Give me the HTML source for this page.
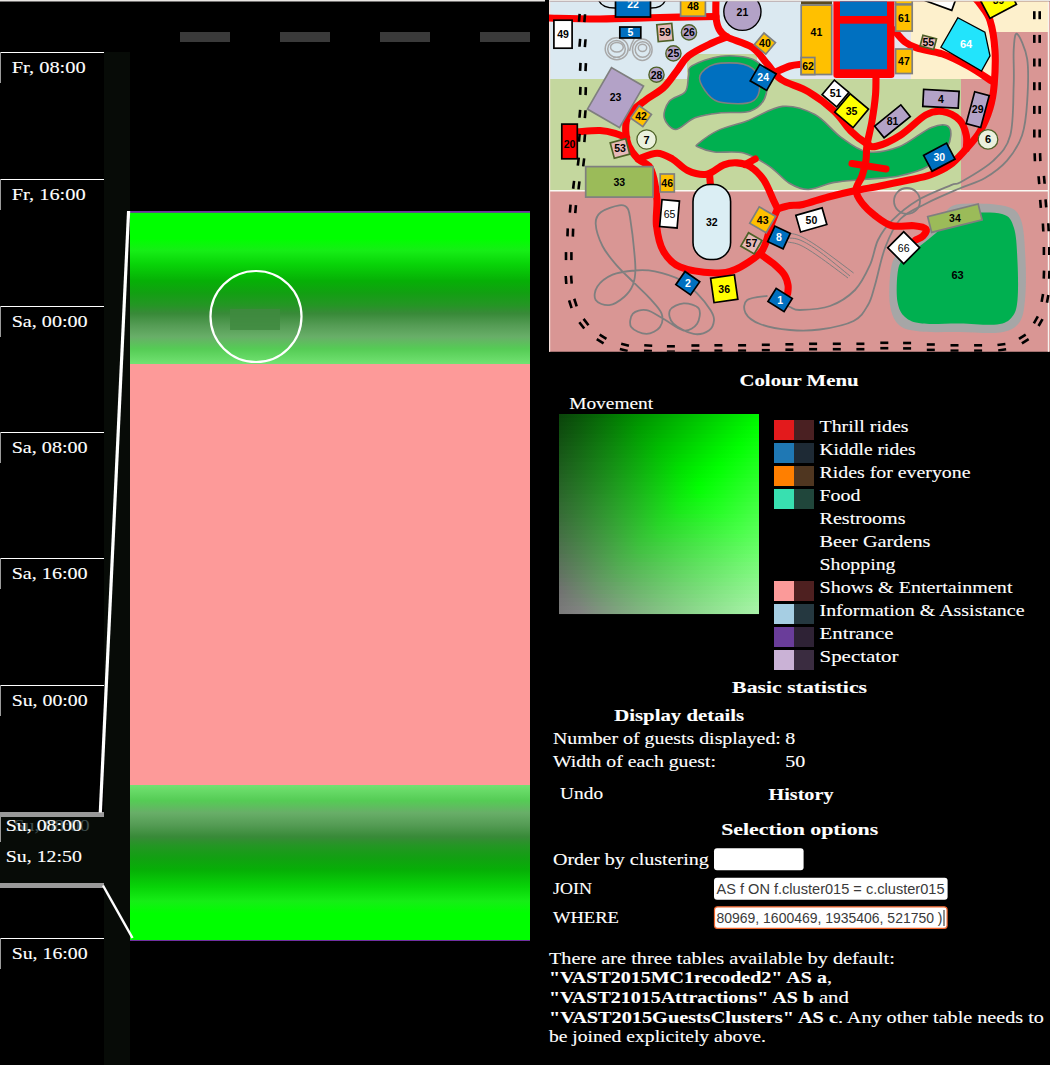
<!DOCTYPE html><html><head><meta charset="utf-8"><title>Guests</title><style>html,body{margin:0;padding:0;background:#000;overflow:hidden}svg{display:block}</style></head><body>
<svg width="1050" height="1065" viewBox="0 0 1050 1065">
<defs>
<linearGradient id="gTop" x1="0" y1="0" x2="0" y2="1"><stop offset="0" stop-color="#00ff00"/><stop offset="0.17" stop-color="#00ff00"/><stop offset="0.25" stop-color="#16ee16"/><stop offset="0.34" stop-color="#08d408"/><stop offset="0.45" stop-color="#06b006"/><stop offset="0.53" stop-color="#12a012"/><stop offset="0.61" stop-color="#249624"/><stop offset="0.665" stop-color="#388a38"/><stop offset="0.745" stop-color="#559c55"/><stop offset="0.82" stop-color="#68ae68"/><stop offset="0.9" stop-color="#55cc55"/><stop offset="1.0" stop-color="#72e272"/></linearGradient>
<linearGradient id="gBot" x1="0" y1="1" x2="0" y2="0"><stop offset="0" stop-color="#00ff00"/><stop offset="0.17" stop-color="#00ff00"/><stop offset="0.25" stop-color="#16ee16"/><stop offset="0.34" stop-color="#08d408"/><stop offset="0.45" stop-color="#06b006"/><stop offset="0.53" stop-color="#12a012"/><stop offset="0.61" stop-color="#249624"/><stop offset="0.665" stop-color="#388a38"/><stop offset="0.745" stop-color="#559c55"/><stop offset="0.82" stop-color="#68ae68"/><stop offset="0.9" stop-color="#55cc55"/><stop offset="1.0" stop-color="#72e272"/></linearGradient>
<linearGradient id="mvTop" x1="0" y1="0" x2="1" y2="0"><stop offset="0" stop-color="#0f4a0f"/><stop offset="0.45" stop-color="#009900"/><stop offset="0.8" stop-color="#00ff00"/><stop offset="1" stop-color="#00ff00"/></linearGradient>
<linearGradient id="mvBot" x1="0" y1="0" x2="1" y2="0"><stop offset="0" stop-color="#808080"/><stop offset="0.5" stop-color="#8cc48c"/><stop offset="1" stop-color="#b4f4b4"/></linearGradient>
<linearGradient id="mvMaskG" x1="0" y1="0" x2="0" y2="1"><stop offset="0" stop-color="#fff" stop-opacity="0"/><stop offset="1" stop-color="#fff" stop-opacity="1"/></linearGradient>
<mask id="mvMask" maskUnits="userSpaceOnUse" x="559" y="414" width="200" height="200"><rect x="559" y="414" width="200" height="200" fill="url(#mvMaskG)"/></mask>
<clipPath id="mapClip"><rect x="549" y="1.5" width="501" height="350.2"/></clipPath>
</defs>
<rect x="0" y="0" width="1050" height="1065" fill="#000"/>
<rect x="104" y="52" width="26" height="1013" fill="#070b07"/>
<rect x="0" y="52" width="104" height="1" fill="#fff"/>
<rect x="0" y="52" width="1" height="31" fill="#9a9a9a"/>
<text x="11.7" y="72.8" font-family="Liberation Serif" font-size="17.3" font-weight="normal" fill="#fff" stroke="#fff" stroke-width="0.12" textLength="74.0" lengthAdjust="spacingAndGlyphs" >Fr, 08:00</text>
<rect x="0" y="179" width="104" height="1" fill="#fff"/>
<rect x="0" y="179" width="1" height="31" fill="#9a9a9a"/>
<text x="11.7" y="199.8" font-family="Liberation Serif" font-size="17.3" font-weight="normal" fill="#fff" stroke="#fff" stroke-width="0.12" textLength="74.0" lengthAdjust="spacingAndGlyphs" >Fr, 16:00</text>
<rect x="0" y="306" width="104" height="1" fill="#fff"/>
<rect x="0" y="306" width="1" height="31" fill="#9a9a9a"/>
<text x="11.7" y="326.8" font-family="Liberation Serif" font-size="17.3" font-weight="normal" fill="#fff" stroke="#fff" stroke-width="0.12" textLength="76.0" lengthAdjust="spacingAndGlyphs" >Sa, 00:00</text>
<rect x="0" y="432" width="104" height="1" fill="#fff"/>
<rect x="0" y="432" width="1" height="31" fill="#9a9a9a"/>
<text x="11.7" y="452.8" font-family="Liberation Serif" font-size="17.3" font-weight="normal" fill="#fff" stroke="#fff" stroke-width="0.12" textLength="76.0" lengthAdjust="spacingAndGlyphs" >Sa, 08:00</text>
<rect x="0" y="558" width="104" height="1" fill="#fff"/>
<rect x="0" y="558" width="1" height="31" fill="#9a9a9a"/>
<text x="11.7" y="578.8" font-family="Liberation Serif" font-size="17.3" font-weight="normal" fill="#fff" stroke="#fff" stroke-width="0.12" textLength="76.0" lengthAdjust="spacingAndGlyphs" >Sa, 16:00</text>
<rect x="0" y="685" width="104" height="1" fill="#fff"/>
<rect x="0" y="685" width="1" height="31" fill="#9a9a9a"/>
<text x="11.7" y="705.8" font-family="Liberation Serif" font-size="17.3" font-weight="normal" fill="#fff" stroke="#fff" stroke-width="0.12" textLength="76.0" lengthAdjust="spacingAndGlyphs" >Su, 00:00</text>
<rect x="0" y="938" width="104" height="1" fill="#fff"/>
<rect x="0" y="938" width="1" height="31" fill="#9a9a9a"/>
<text x="11.7" y="958.8" font-family="Liberation Serif" font-size="17.3" font-weight="normal" fill="#fff" stroke="#fff" stroke-width="0.12" textLength="76.0" lengthAdjust="spacingAndGlyphs" >Su, 16:00</text>
<rect x="0" y="817" width="104" height="66" fill="#070b07"/>
<rect x="0" y="812" width="104" height="5" fill="#9a9a9a"/>
<rect x="0" y="883" width="104" height="5" fill="#9a9a9a"/>
<rect x="0" y="817" width="1" height="25" fill="#9a9a9a"/>
<text x="13.6" y="831.2" font-family="Liberation Serif" font-size="17.3" font-weight="normal" fill="#3d4d4d" stroke="#3d4d4d" stroke-width="0.12" textLength="76.0" lengthAdjust="spacingAndGlyphs" >Su, 08:00</text>
<text x="5.8" y="831.2" font-family="Liberation Serif" font-size="17.3" font-weight="normal" fill="#fff" stroke="#fff" stroke-width="0.12" textLength="76.0" lengthAdjust="spacingAndGlyphs" >Su, 08:00</text>
<text x="5.8" y="861.6" font-family="Liberation Serif" font-size="17.3" font-weight="normal" fill="#fff" stroke="#fff" stroke-width="0.12" textLength="76.0" lengthAdjust="spacingAndGlyphs" >Su, 12:50</text>
<rect x="180" y="32" width="50" height="10" fill="#3a3a3a"/>
<rect x="280" y="32" width="50" height="10" fill="#3a3a3a"/>
<rect x="380" y="32" width="50" height="10" fill="#3a3a3a"/>
<rect x="480" y="32" width="50" height="10" fill="#3a3a3a"/>
<rect x="130" y="211" width="400" height="2" fill="#7030a0"/>
<rect x="130" y="939.8" width="400" height="1.2" fill="#7030a0"/>
<rect x="130" y="212.8" width="50" height="151.2" fill="url(#gTop)"/>
<rect x="130" y="364" width="50" height="421" fill="#fd9a99"/>
<rect x="130" y="785" width="50" height="155" fill="url(#gBot)"/>
<rect x="180" y="212.8" width="50" height="151.2" fill="url(#gTop)"/>
<rect x="180" y="364" width="50" height="421" fill="#fd9a99"/>
<rect x="180" y="785" width="50" height="155" fill="url(#gBot)"/>
<rect x="230" y="212.8" width="50" height="151.2" fill="url(#gTop)"/>
<rect x="230" y="364" width="50" height="421" fill="#fd9a99"/>
<rect x="230" y="785" width="50" height="155" fill="url(#gBot)"/>
<rect x="280" y="212.8" width="50" height="151.2" fill="url(#gTop)"/>
<rect x="280" y="364" width="50" height="421" fill="#fd9a99"/>
<rect x="280" y="785" width="50" height="155" fill="url(#gBot)"/>
<rect x="330" y="212.8" width="50" height="151.2" fill="url(#gTop)"/>
<rect x="330" y="364" width="50" height="421" fill="#fd9a99"/>
<rect x="330" y="785" width="50" height="155" fill="url(#gBot)"/>
<rect x="380" y="212.8" width="50" height="151.2" fill="url(#gTop)"/>
<rect x="380" y="364" width="50" height="421" fill="#fd9a99"/>
<rect x="380" y="785" width="50" height="155" fill="url(#gBot)"/>
<rect x="430" y="212.8" width="50" height="151.2" fill="url(#gTop)"/>
<rect x="430" y="364" width="50" height="421" fill="#fd9a99"/>
<rect x="430" y="785" width="50" height="155" fill="url(#gBot)"/>
<rect x="480" y="212.8" width="50" height="151.2" fill="url(#gTop)"/>
<rect x="480" y="364" width="50" height="421" fill="#fd9a99"/>
<rect x="480" y="785" width="50" height="155" fill="url(#gBot)"/>
<rect x="230" y="309" width="50" height="21" fill="#3f8a3f" opacity="0.85"/>
<circle cx="256" cy="316.5" r="45.5" fill="none" stroke="#fff" stroke-width="2.2"/>
<line x1="128.6" y1="211" x2="100.3" y2="812.5" stroke="#fff" stroke-width="3.2"/>
<line x1="103" y1="885.5" x2="132.5" y2="938" stroke="#fff" stroke-width="2.5"/>
<rect x="0" y="0" width="1050" height="1.5" fill="#e9e6e3"/>
<g clip-path="url(#mapClip)">
<rect x="549" y="0" width="501" height="352" fill="#d99694"/>
<rect x="549" y="0" width="346" height="79" fill="#dbe9f1"/>
<rect x="895" y="0" width="153" height="79" fill="#fdf0cc"/>
<rect x="993" y="32" width="55" height="47" fill="#d99694"/>
<rect x="549" y="79" width="412" height="111.5" fill="#c4d79e"/>
<rect x="687" y="54" width="70" height="25" fill="#c4d79e"/>
<rect x="801" y="73" width="94" height="6" fill="#e4e4ee"/>
<rect x="895" y="30" width="16" height="20" fill="#e4e4ee"/>
<rect x="895" y="73" width="16" height="6" fill="#e4e4ee"/>
<rect x="549" y="190" width="499" height="1.5" fill="#fafaf4"/>
<rect x="549" y="0" width="1.2" height="352" fill="#f6e0dc"/>
<rect x="1047.8" y="0" width="1.4" height="352" fill="#f8f4f0"/>
<path d="M691.8,65.9 C697.2,62.7 710.8,57.3 721.0,56.2 C731.2,55.1 745.8,56.2 753.3,59.4 C760.8,62.6 764.4,69.1 766.3,75.6 C768.2,82.1 767.4,92.4 764.7,98.3 C762.0,104.2 757.4,108.8 750.1,111.2 C742.8,113.6 730.2,111.7 721.0,112.8 C711.8,113.9 702.5,114.9 695.0,117.7 C687.5,120.5 681.1,129.4 676.0,129.5 C670.9,129.6 665.4,122.7 664.3,118.0 C663.1,113.3 665.6,105.9 669.1,101.5 C672.6,97.1 682.0,96.1 685.3,91.8 C688.5,87.5 687.5,79.9 688.6,75.6 C689.7,71.3 686.4,69.1 691.8,65.9Z" fill="#00b050" stroke="#7f7f7f" stroke-width="1.6"/>
<path d="M699.9,75.6 C701.5,71.3 707.2,66.2 714.5,64.3 C721.8,62.4 736.3,62.4 743.6,64.3 C750.9,66.2 755.8,70.5 758.2,75.6 C760.6,80.7 760.1,90.4 758.2,95.0 C756.3,99.6 753.6,102.0 746.9,103.1 C740.1,104.2 724.7,103.7 717.7,101.5 C710.7,99.3 707.8,94.5 704.8,90.2 C701.8,85.9 698.3,79.9 699.9,75.6Z" fill="#0070c0" stroke="#7f7f7f" stroke-width="1.6"/>
<path d="M698.3,143.6 C701.5,140.9 709.6,134.4 717.7,130.6 C725.8,126.8 736.1,125.0 746.9,121.0 C757.7,117.0 771.2,107.5 782.5,106.4 C793.8,105.3 805.2,109.4 814.9,114.5 C824.6,119.6 832.2,130.9 840.8,137.1 C849.4,143.3 857.0,150.1 866.7,151.7 C876.4,153.3 888.3,150.9 899.1,146.8 C909.9,142.8 923.1,130.6 931.5,127.4 C939.9,124.2 946.6,124.2 949.3,127.4 C952.0,130.6 951.1,140.3 947.6,146.8 C944.1,153.3 936.3,161.4 928.2,166.3 C920.1,171.2 909.4,173.8 899.1,176.0 C888.9,178.2 877.5,178.1 866.7,179.2 C855.9,180.3 844.0,180.7 834.3,182.4 C824.6,184.1 815.9,189.4 808.4,189.5 C800.9,189.6 795.5,186.9 789.0,183.0 C782.5,179.1 777.1,171.3 769.5,166.3 C761.9,161.3 752.8,155.4 743.6,153.0 C734.4,150.6 722.0,153.0 714.5,152.0 C707.0,151.0 701.0,148.4 698.3,147.0 C695.6,145.6 695.1,146.3 698.3,143.6Z" fill="#00b050" stroke="#7f7f7f" stroke-width="1.6"/>
<path d="M960.0,204.0 C970.0,203.0 994.8,203.3 1005.0,206.0 C1015.2,208.7 1017.6,211.0 1021.0,220.0 C1024.4,229.0 1024.8,246.7 1025.5,260.0 C1026.2,273.3 1026.1,289.5 1025.0,300.0 C1023.9,310.5 1023.2,317.6 1019.0,323.0 C1014.8,328.4 1009.8,331.0 1000.0,332.5 C990.2,334.0 973.3,332.2 960.0,332.0 C946.7,331.8 930.2,332.7 920.0,331.5 C909.8,330.3 904.0,329.4 899.0,325.0 C894.0,320.6 891.4,313.8 890.0,305.0 C888.6,296.2 889.3,280.5 890.5,272.0 C891.7,263.5 892.9,259.3 897.0,254.0 C901.1,248.7 909.2,244.7 915.0,240.0 C920.8,235.3 927.0,230.7 932.0,226.0 C937.0,221.3 940.3,215.7 945.0,212.0 C949.7,208.3 950.0,205.0 960.0,204.0Z" fill="#a6a6a6"/>
<path d="M965.0,213.5 C973.7,212.5 993.8,211.6 1002.0,214.0 C1010.2,216.4 1011.4,220.0 1014.0,228.0 C1016.6,236.0 1016.9,250.0 1017.5,262.0 C1018.1,274.0 1018.4,290.8 1017.5,300.0 C1016.6,309.2 1015.4,312.9 1012.0,317.0 C1008.6,321.1 1005.7,323.4 997.0,324.5 C988.3,325.6 972.5,323.7 960.0,323.5 C947.5,323.3 931.2,324.6 922.0,323.5 C912.8,322.4 909.1,320.6 905.0,317.0 C900.9,313.4 898.8,309.2 897.5,302.0 C896.2,294.8 896.6,281.2 897.5,274.0 C898.4,266.8 899.2,263.7 903.0,259.0 C906.8,254.3 914.5,250.3 920.0,246.0 C925.5,241.7 931.0,237.3 936.0,233.0 C941.0,228.7 945.2,223.2 950.0,220.0 C954.8,216.8 956.3,214.5 965.0,213.5Z" fill="#00b050"/>
<path d="M595.7,224.0 C596.0,229.6 599.1,239.2 602.5,246.0 C605.9,252.8 610.4,258.1 616.0,264.6 C621.6,271.1 630.6,279.3 636.2,284.9 C641.8,290.5 645.6,293.6 649.8,298.4 C654.0,303.2 659.9,308.8 661.6,313.6 C663.3,318.4 662.4,323.7 659.9,327.1 C657.4,330.5 651.2,333.9 646.4,333.9 C641.6,333.9 633.5,330.5 631.2,327.1 C629.0,323.7 630.4,316.4 632.9,313.6 C635.4,310.8 641.3,309.4 646.4,310.2 C651.5,311.0 657.1,315.3 663.3,318.7 C669.5,322.1 678.0,329.7 683.6,330.5 C689.2,331.3 694.6,327.4 697.1,323.7 C699.6,320.0 701.0,311.9 698.8,308.5 C696.5,305.1 688.4,303.1 683.6,303.4 C678.8,303.7 671.7,306.8 670.0,310.2 C668.3,313.6 669.4,319.8 673.4,323.7 C677.4,327.6 687.8,332.8 693.7,333.9 C699.6,335.0 705.5,332.8 708.9,330.5 C712.3,328.2 713.7,323.7 714.0,320.3 C714.3,316.9 713.4,314.7 710.6,310.2 C707.8,305.7 702.2,298.4 697.1,293.3 C692.0,288.2 687.2,283.5 680.2,279.8 C673.2,276.1 662.4,272.9 654.8,271.3 C647.2,269.8 641.6,269.9 634.6,270.5 C627.6,271.1 618.8,272.0 612.6,274.7 C606.4,277.4 600.2,282.3 597.4,286.5 C594.6,290.7 593.7,297.0 595.7,300.1 C597.7,303.2 604.4,305.7 609.2,305.1 C614.0,304.5 620.5,300.1 624.4,296.7 C628.3,293.3 631.1,289.4 632.9,284.9 C634.7,280.4 635.3,276.1 635.4,269.6 C635.5,263.1 634.4,253.3 633.7,246.0 C633.0,238.7 632.2,231.9 631.2,225.7 C630.2,219.5 629.8,212.2 627.8,208.8 C625.8,205.4 623.8,204.8 619.3,205.4 C614.8,206.0 604.7,209.1 600.8,212.2 C596.9,215.3 595.4,218.4 595.7,224.0Z" fill="none" stroke="#7f7f7f" stroke-width="1.8"/>
<path d="M767.5,295.8 C764.1,296.5 750.9,297.1 747.2,300.0 C743.5,302.9 743.4,309.0 745.5,313.0 C747.6,317.0 752.6,321.2 760.0,324.0 C767.4,326.8 780.0,329.1 790.0,330.0 C800.0,330.9 809.2,331.0 819.8,329.5 C830.4,328.0 845.6,325.1 853.6,321.0 C861.6,316.9 864.4,311.0 868.0,305.0 C871.6,299.0 872.1,294.6 875.0,285.0 C877.9,275.4 880.9,258.7 885.1,247.7 C889.3,236.7 893.6,226.3 900.4,219.0 C907.2,211.7 915.9,208.8 925.7,203.7 C935.6,198.6 949.6,192.8 959.5,188.5 C969.4,184.2 977.1,182.7 985.0,178.0 C992.9,173.3 1000.8,167.7 1007.0,160.6 C1013.2,153.5 1018.7,145.1 1022.1,135.2 C1025.5,125.3 1026.4,114.1 1027.2,101.4 C1028.0,88.7 1028.9,70.5 1027.2,59.2 C1025.5,47.9 1019.2,35.3 1017.0,33.8 C1014.8,32.3 1014.2,41.5 1013.7,50.0 C1013.2,58.5 1014.3,70.3 1013.7,84.5 C1013.1,98.7 1013.7,122.5 1010.3,135.2 C1006.9,147.9 1001.6,152.8 993.4,160.6 C985.2,168.4 968.0,177.9 961.0,182.0 C954.0,186.1 958.4,182.0 951.1,185.1 C943.8,188.2 927.2,194.5 917.3,200.4 C907.4,206.3 898.4,214.0 891.9,220.6 C885.4,227.2 881.6,232.6 878.0,240.0 C874.4,247.4 873.8,256.7 870.0,265.0 C866.2,273.3 861.7,283.2 855.0,290.0 C848.3,296.8 839.2,302.7 830.0,306.0 C820.8,309.3 806.7,309.8 800.0,310.0 C793.3,310.2 793.2,308.2 790.0,307.0 C786.8,305.8 782.5,303.7 781.0,303.0" fill="none" stroke="#7f7f7f" stroke-width="1.8"/>
<circle cx="907" cy="201" r="13" fill="none" stroke="#7f7f7f" stroke-width="1.8"/>
<path d="M787.7,233.0 C789.8,233.5 794.6,233.5 800.0,236.0 C805.4,238.5 811.1,241.8 820.0,248.0 C828.9,254.2 848.0,268.8 853.6,273.0" fill="none" stroke="#7f7f7f" stroke-width="1"/>
<path d="M787.7,238.0 C789.8,238.3 794.6,237.7 800.0,240.0 C805.4,242.3 811.7,246.0 820.0,252.0 C828.3,258.0 845.0,272.0 850.0,276.0" fill="none" stroke="#7f7f7f" stroke-width="1"/>
<path d="M787.7,242.0 C789.8,242.5 795.0,242.7 800.0,245.0 C805.0,247.3 810.0,250.5 818.0,256.0 C826.0,261.5 843.0,274.3 848.0,278.0" fill="none" stroke="#7f7f7f" stroke-width="1"/>
<ellipse cx="616.7" cy="48.7" rx="11.5" ry="11" fill="none" stroke="#a8a8a8" stroke-width="1.5"/>
<ellipse cx="616.5" cy="48.9" rx="8.8" ry="8.4" fill="none" stroke="#a8a8a8" stroke-width="1.5"/>
<ellipse cx="616.9" cy="47.3" rx="6.4" ry="4.8" fill="none" stroke="#a8a8a8" stroke-width="1.5"/>
<ellipse cx="642.3" cy="49.7" rx="9.8" ry="10.8" fill="none" stroke="#a8a8a8" stroke-width="1.5"/>
<ellipse cx="642.7" cy="49.5" rx="7.5" ry="7.8" fill="none" stroke="#a8a8a8" stroke-width="1.5"/>
<ellipse cx="642.5" cy="47.8" rx="4.2" ry="3.6" fill="none" stroke="#a8a8a8" stroke-width="1.5"/>
<path d="M634.3,38.7 Q631,44 629.5,51" fill="none" stroke="#a8a8a8" stroke-width="1.5"/>
<path d="M549.0,18.0 C557.5,18.2 581.5,19.1 600.0,19.0 C618.5,18.9 640.7,17.9 660.0,17.5 C679.3,17.1 706.7,16.7 716.0,16.5" fill="none" stroke="#ff0000" stroke-width="7.1" stroke-linecap="round" stroke-linejoin="round"/>
<path d="M716.0,-2.0 C716.0,1.2 715.5,11.8 716.0,17.0 C716.5,22.2 717.2,25.7 719.0,29.0 C720.8,32.3 721.5,34.0 727.0,37.0 C732.5,40.0 745.5,42.8 752.2,47.3 C759.0,51.8 762.7,58.9 767.5,64.2 C772.3,69.6 774.2,74.8 781.0,79.4 C787.8,84.0 799.5,86.5 808.4,91.8 C817.3,97.1 827.3,104.7 834.3,111.2 C841.3,117.7 845.1,125.3 850.5,130.7 C855.9,136.1 862.4,141.0 866.7,143.6 C871.0,146.2 870.8,147.7 876.4,146.3 C882.0,144.9 892.2,140.4 900.4,135.2 C908.6,130.0 918.7,119.0 925.7,115.0 C932.7,111.0 937.0,110.7 942.6,111.5 C948.2,112.3 955.5,116.0 959.5,120.0 C963.5,124.0 965.2,130.4 966.3,135.2 C967.4,140.0 966.3,146.4 966.3,148.7" fill="none" stroke="#ff0000" stroke-width="7.1" stroke-linecap="round" stroke-linejoin="round"/>
<path d="M727.0,37.0 C724.5,38.0 718.4,39.9 712.0,43.0 C705.6,46.1 694.5,51.1 688.6,55.8 C682.7,60.5 681.0,65.7 676.8,71.0 C672.6,76.3 668.5,83.1 663.3,87.9 C658.1,92.7 651.5,95.5 645.7,100.0 C639.9,104.5 631.9,110.1 628.6,115.2 C625.3,120.3 625.7,125.4 625.7,130.5 C625.7,135.6 626.5,140.9 628.6,145.7 C630.7,150.4 634.7,155.6 638.1,159.0 C641.5,162.4 646.4,162.7 649.0,166.0 C651.6,169.3 652.7,173.3 654.0,179.0 C655.3,184.7 656.6,192.2 657.0,200.0 C657.4,207.8 655.5,217.2 656.5,225.7 C657.5,234.2 659.3,244.1 663.3,251.0 C667.2,257.9 671.6,263.4 680.2,267.1 C688.8,270.8 705.8,272.6 715.0,273.0 C724.2,273.4 728.0,272.7 735.3,269.6 C742.6,266.5 753.9,258.9 759.0,254.4 C764.1,249.9 763.8,247.5 765.8,242.6 C767.8,237.7 769.0,230.6 771.0,225.0 C773.0,219.4 776.5,211.5 777.6,208.8" fill="none" stroke="#ff0000" stroke-width="7.1" stroke-linecap="round" stroke-linejoin="round"/>
<path d="M638.1,159.0 C641.3,158.1 651.4,153.3 657.1,153.3 C662.8,153.3 667.3,156.1 672.4,159.0 C677.5,161.9 681.9,167.9 687.6,170.5 C693.3,173.1 700.7,175.2 706.7,174.3 C712.7,173.4 718.7,166.7 723.8,164.8 C728.9,162.9 732.6,162.6 737.1,162.9 C741.6,163.2 746.0,163.8 750.5,166.7 C755.0,169.5 760.0,174.4 763.8,180.0 C767.6,185.6 771.0,195.2 773.3,200.0 C775.6,204.8 776.9,207.3 777.6,208.8" fill="none" stroke="#ff0000" stroke-width="7.1" stroke-linecap="round" stroke-linejoin="round"/>
<path d="M777.6,208.8 C779.7,208.2 785.8,206.2 790.0,205.5 C794.2,204.8 796.6,205.9 803.0,204.5 C809.4,203.1 819.9,199.2 828.3,197.0 C836.7,194.8 845.0,192.8 853.6,191.0 C862.2,189.2 870.8,187.8 880.0,186.0 C889.2,184.2 900.5,181.8 908.8,180.0 C917.1,178.2 923.1,177.5 930.0,175.0 C936.9,172.5 944.0,169.4 950.0,165.0 C956.0,160.6 961.3,154.2 966.3,148.7 C971.3,143.2 975.8,138.6 979.8,131.8 C983.8,125.1 987.6,116.1 990.0,108.2 C992.4,100.3 993.4,94.1 994.2,84.5 C995.0,74.9 995.7,61.4 995.0,50.7 C994.3,40.0 992.5,28.1 990.0,20.3 C987.5,12.5 982.7,7.9 980.0,4.0 C977.3,0.1 975.0,-1.8 974.0,-3.0" fill="none" stroke="#ff0000" stroke-width="7.1" stroke-linecap="round" stroke-linejoin="round"/>
<path d="M577.4,131.8 C581.2,131.6 593.7,130.2 600.0,130.5 C606.3,130.8 610.8,132.0 615.2,133.3 C619.7,134.6 624.8,137.3 626.7,138.1" fill="none" stroke="#ff0000" stroke-width="7.1" stroke-linecap="round" stroke-linejoin="round"/>
<path d="M876.0,72.0 C875.9,75.8 876.2,86.8 875.5,95.0 C874.8,103.2 873.4,112.7 872.0,121.0 C870.6,129.3 868.0,138.5 867.0,145.0 C866.0,151.5 866.8,154.8 866.0,160.0 C865.2,165.2 863.7,171.0 862.0,176.0 C860.3,181.0 856.0,185.5 856.0,190.0 C856.0,194.5 858.8,198.7 862.0,203.0 C865.2,207.3 870.0,211.8 875.0,215.6 C880.0,219.4 885.4,224.0 891.9,225.7 C898.4,227.4 908.2,225.1 913.9,225.7 C919.6,226.2 924.5,227.3 926.0,229.0 C927.5,230.7 924.7,234.2 923.0,236.0 C921.3,237.8 916.8,239.3 915.6,240.0" fill="none" stroke="#ff0000" stroke-width="7.1" stroke-linecap="round" stroke-linejoin="round"/>
<path d="M760.7,254.4 C763.1,256.2 771.1,261.6 775.0,265.0 C778.9,268.4 782.1,271.4 784.3,274.7 C786.5,278.0 787.4,281.9 788.0,285.0 C788.6,288.1 787.8,291.9 787.7,293.3" fill="none" stroke="#ff0000" stroke-width="7.1" stroke-linecap="round" stroke-linejoin="round"/>
<path d="M774.2,72.7 C776.8,71.6 785.5,67.4 790.0,66.0 C794.5,64.6 799.3,64.5 801.2,64.2" fill="none" stroke="#ff0000" stroke-width="7.1" stroke-linecap="round" stroke-linejoin="round"/>
<path d="M894.0,30.0 C895.8,32.0 901.1,39.0 905.0,42.0 C908.9,45.0 911.0,46.2 917.3,48.2 C923.6,50.2 934.1,51.0 942.6,54.0 C951.1,57.0 959.8,61.5 968.0,66.0 C976.2,70.5 987.8,78.5 991.7,81.0" fill="none" stroke="#ff0000" stroke-width="7.1" stroke-linecap="round" stroke-linejoin="round"/>
<path d="M709.5,174.0 C709.7,176.0 710.3,184.0 710.5,186.0" fill="none" stroke="#ff0000" stroke-width="7.1" stroke-linecap="round" stroke-linejoin="round"/>
<path d="M745.0,164.5 C746.7,163.6 753.5,159.9 755.2,159.0" fill="none" stroke="#ff0000" stroke-width="7.1" stroke-linecap="round" stroke-linejoin="round"/>
<path d="M852.0,163.5 C857.7,164.4 880.3,168.1 886.0,169.0" fill="none" stroke="#ff0000" stroke-width="7.1" stroke-linecap="round" stroke-linejoin="round"/>
<rect x="833.4" y="-5" width="61" height="83" rx="3" fill="#ff0000"/>
<rect x="840" y="-2" width="47" height="18" fill="#0070c0"/>
<rect x="840" y="23.7" width="47" height="45.6" fill="#0070c0"/>
<g transform="translate(582,18) rotate(95)"><rect x="-4" y="-4" width="8" height="2.6" fill="#000"/><rect x="-4" y="1.4" width="8" height="2.6" fill="#000"/></g>
<g transform="translate(582.5,43) rotate(95)"><rect x="-4" y="-4" width="8" height="2.6" fill="#000"/><rect x="-4" y="1.4" width="8" height="2.6" fill="#000"/></g>
<g transform="translate(583,67) rotate(93)"><rect x="-4" y="-4" width="8" height="2.6" fill="#000"/><rect x="-4" y="1.4" width="8" height="2.6" fill="#000"/></g>
<g transform="translate(583,91) rotate(92)"><rect x="-4" y="-4" width="8" height="2.6" fill="#000"/><rect x="-4" y="1.4" width="8" height="2.6" fill="#000"/></g>
<g transform="translate(582.5,114) rotate(95)"><rect x="-4" y="-4" width="8" height="2.6" fill="#000"/><rect x="-4" y="1.4" width="8" height="2.6" fill="#000"/></g>
<g transform="translate(582,138) rotate(95)"><rect x="-4" y="-4" width="8" height="2.6" fill="#000"/><rect x="-4" y="1.4" width="8" height="2.6" fill="#000"/></g>
<g transform="translate(581,162) rotate(97)"><rect x="-4" y="-4" width="8" height="2.6" fill="#000"/><rect x="-4" y="1.4" width="8" height="2.6" fill="#000"/></g>
<g transform="translate(576.3,185.1) rotate(97)"><rect x="-4" y="-4" width="8" height="2.6" fill="#000"/><rect x="-4" y="1.4" width="8" height="2.6" fill="#000"/></g>
<g transform="translate(572.9,208.8) rotate(95)"><rect x="-4" y="-4" width="8" height="2.6" fill="#000"/><rect x="-4" y="1.4" width="8" height="2.6" fill="#000"/></g>
<g transform="translate(570.3,232.5) rotate(92)"><rect x="-4" y="-4" width="8" height="2.6" fill="#000"/><rect x="-4" y="1.4" width="8" height="2.6" fill="#000"/></g>
<g transform="translate(568.7,256.1) rotate(90)"><rect x="-4" y="-4" width="8" height="2.6" fill="#000"/><rect x="-4" y="1.4" width="8" height="2.6" fill="#000"/></g>
<g transform="translate(568.7,279.8) rotate(86)"><rect x="-4" y="-4" width="8" height="2.6" fill="#000"/><rect x="-4" y="1.4" width="8" height="2.6" fill="#000"/></g>
<g transform="translate(572.9,303.4) rotate(72)"><rect x="-4" y="-4" width="8" height="2.6" fill="#000"/><rect x="-4" y="1.4" width="8" height="2.6" fill="#000"/></g>
<g transform="translate(583.9,323.7) rotate(52)"><rect x="-4" y="-4" width="8" height="2.6" fill="#000"/><rect x="-4" y="1.4" width="8" height="2.6" fill="#000"/></g>
<g transform="translate(601.6,339) rotate(32)"><rect x="-4" y="-4" width="8" height="2.6" fill="#000"/><rect x="-4" y="1.4" width="8" height="2.6" fill="#000"/></g>
<g transform="translate(624.4,347.4) rotate(14)"><rect x="-4" y="-4" width="8" height="2.6" fill="#000"/><rect x="-4" y="1.4" width="8" height="2.6" fill="#000"/></g>
<g transform="translate(648.1,348.2) rotate(3)"><rect x="-4" y="-4" width="8" height="2.6" fill="#000"/><rect x="-4" y="1.4" width="8" height="2.6" fill="#000"/></g>
<g transform="translate(670.9,349) rotate(0)"><rect x="-4" y="-4" width="8" height="2.6" fill="#000"/><rect x="-4" y="1.4" width="8" height="2.6" fill="#000"/></g>
<g transform="translate(695.4,348.2) rotate(0)"><rect x="-4" y="-4" width="8" height="2.6" fill="#000"/><rect x="-4" y="1.4" width="8" height="2.6" fill="#000"/></g>
<g transform="translate(718.4,348) rotate(0)"><rect x="-4" y="-4" width="8" height="2.6" fill="#000"/><rect x="-4" y="1.4" width="8" height="2.6" fill="#000"/></g>
<g transform="translate(742.1,348) rotate(0)"><rect x="-4" y="-4" width="8" height="2.6" fill="#000"/><rect x="-4" y="1.4" width="8" height="2.6" fill="#000"/></g>
<g transform="translate(765.8,347.5) rotate(0)"><rect x="-4" y="-4" width="8" height="2.6" fill="#000"/><rect x="-4" y="1.4" width="8" height="2.6" fill="#000"/></g>
<g transform="translate(789.4,347) rotate(0)"><rect x="-4" y="-4" width="8" height="2.6" fill="#000"/><rect x="-4" y="1.4" width="8" height="2.6" fill="#000"/></g>
<g transform="translate(813.1,346.5) rotate(0)"><rect x="-4" y="-4" width="8" height="2.6" fill="#000"/><rect x="-4" y="1.4" width="8" height="2.6" fill="#000"/></g>
<g transform="translate(836.8,346.5) rotate(0)"><rect x="-4" y="-4" width="8" height="2.6" fill="#000"/><rect x="-4" y="1.4" width="8" height="2.6" fill="#000"/></g>
<g transform="translate(860.4,346.5) rotate(0)"><rect x="-4" y="-4" width="8" height="2.6" fill="#000"/><rect x="-4" y="1.4" width="8" height="2.6" fill="#000"/></g>
<g transform="translate(884.3,345.5) rotate(0)"><rect x="-4" y="-4" width="8" height="2.6" fill="#000"/><rect x="-4" y="1.4" width="8" height="2.6" fill="#000"/></g>
<g transform="translate(907.1,345.7) rotate(0)"><rect x="-4" y="-4" width="8" height="2.6" fill="#000"/><rect x="-4" y="1.4" width="8" height="2.6" fill="#000"/></g>
<g transform="translate(930.8,347.2) rotate(0)"><rect x="-4" y="-4" width="8" height="2.6" fill="#000"/><rect x="-4" y="1.4" width="8" height="2.6" fill="#000"/></g>
<g transform="translate(954.5,348) rotate(0)"><rect x="-4" y="-4" width="8" height="2.6" fill="#000"/><rect x="-4" y="1.4" width="8" height="2.6" fill="#000"/></g>
<g transform="translate(978.1,348) rotate(0)"><rect x="-4" y="-4" width="8" height="2.6" fill="#000"/><rect x="-4" y="1.4" width="8" height="2.6" fill="#000"/></g>
<g transform="translate(1001.8,347.2) rotate(-8)"><rect x="-4" y="-4" width="8" height="2.6" fill="#000"/><rect x="-4" y="1.4" width="8" height="2.6" fill="#000"/></g>
<g transform="translate(1023.8,339) rotate(-33)"><rect x="-4" y="-4" width="8" height="2.6" fill="#000"/><rect x="-4" y="1.4" width="8" height="2.6" fill="#000"/></g>
<g transform="translate(1038.2,321.2) rotate(-60)"><rect x="-4" y="-4" width="8" height="2.6" fill="#000"/><rect x="-4" y="1.4" width="8" height="2.6" fill="#000"/></g>
<g transform="translate(1045,298.4) rotate(-80)"><rect x="-4" y="-4" width="8" height="2.6" fill="#000"/><rect x="-4" y="1.4" width="8" height="2.6" fill="#000"/></g>
<g transform="translate(1046.6,274.7) rotate(-88)"><rect x="-4" y="-4" width="8" height="2.6" fill="#000"/><rect x="-4" y="1.4" width="8" height="2.6" fill="#000"/></g>
<g transform="translate(1046.6,251) rotate(90)"><rect x="-4" y="-4" width="8" height="2.6" fill="#000"/><rect x="-4" y="1.4" width="8" height="2.6" fill="#000"/></g>
<g transform="translate(1045.8,227.4) rotate(87)"><rect x="-4" y="-4" width="8" height="2.6" fill="#000"/><rect x="-4" y="1.4" width="8" height="2.6" fill="#000"/></g>
<g transform="translate(1043.2,203.7) rotate(85)"><rect x="-4" y="-4" width="8" height="2.6" fill="#000"/><rect x="-4" y="1.4" width="8" height="2.6" fill="#000"/></g>
<g transform="translate(1041.6,180) rotate(85)"><rect x="-4" y="-4" width="8" height="2.6" fill="#000"/><rect x="-4" y="1.4" width="8" height="2.6" fill="#000"/></g>
<g transform="translate(1037.5,157.2) rotate(88)"><rect x="-4" y="-4" width="8" height="2.6" fill="#000"/><rect x="-4" y="1.4" width="8" height="2.6" fill="#000"/></g>
<g transform="translate(1037,133.5) rotate(90)"><rect x="-4" y="-4" width="8" height="2.6" fill="#000"/><rect x="-4" y="1.4" width="8" height="2.6" fill="#000"/></g>
<g transform="translate(1037,109.9) rotate(90)"><rect x="-4" y="-4" width="8" height="2.6" fill="#000"/><rect x="-4" y="1.4" width="8" height="2.6" fill="#000"/></g>
<g transform="translate(1037,86.2) rotate(90)"><rect x="-4" y="-4" width="8" height="2.6" fill="#000"/><rect x="-4" y="1.4" width="8" height="2.6" fill="#000"/></g>
<g transform="translate(1037,62.5) rotate(90)"><rect x="-4" y="-4" width="8" height="2.6" fill="#000"/><rect x="-4" y="1.4" width="8" height="2.6" fill="#000"/></g>
<g transform="translate(1037,38.9) rotate(90)"><rect x="-4" y="-4" width="8" height="2.6" fill="#000"/><rect x="-4" y="1.4" width="8" height="2.6" fill="#000"/></g>
<g transform="translate(1037,15.2) rotate(90)"><rect x="-4" y="-4" width="8" height="2.6" fill="#000"/><rect x="-4" y="1.4" width="8" height="2.6" fill="#000"/></g>
<g transform="translate(941,-1) rotate(20)"><rect x="-14.0" y="-7.0" width="28" height="14" rx="0" fill="#ffffff" stroke="#000" stroke-width="1.7"/></g>
<g transform="translate(998.5,2.5) rotate(-28)"><rect x="-15.0" y="-10.0" width="30" height="20" rx="0" fill="#ffff00" stroke="#000" stroke-width="1.7"/></g>
<text x="998.5" y="4.3" text-anchor="middle" font-family="Liberation Sans" font-size="10.5" font-weight="bold" fill="#000">39</text>
<g transform="translate(903.9,0) rotate(0)"><rect x="-8.3" y="-4.0" width="16.6" height="8" rx="0" fill="#ffc000" stroke="#7f7f7f" stroke-width="1.7"/></g>
<rect x="801" y="0" width="31" height="4.5" fill="#5a4a20"/>
<path d="M598,-2 Q600,8 615,8" fill="none" stroke="#000" stroke-width="1.4"/>
<path d="M651,8 Q664,8 666,-2" fill="none" stroke="#000" stroke-width="1.4"/>
<g transform="translate(563,34.2) rotate(0)"><rect x="-9.1" y="-14.0" width="18.2" height="28" rx="0" fill="#fff" stroke="#000" stroke-width="1.7"/></g>
<text x="563" y="38.0" text-anchor="middle" font-family="Liberation Sans" font-size="10.5" font-weight="bold" fill="#000">49</text>
<g transform="translate(633,7.5) rotate(0)"><rect x="-17.5" y="-9.5" width="35" height="19" rx="0" fill="#0070c0" stroke="#000" stroke-width="1.7"/></g>
<text x="633" y="8.3" text-anchor="middle" font-family="Liberation Sans" font-size="10.5" font-weight="bold" fill="#fff">22</text>
<g transform="translate(693,6.5) rotate(0)"><rect x="-12.4" y="-9.7" width="24.8" height="19.4" rx="0" fill="#ffc000" stroke="#7f7f7f" stroke-width="1.7"/></g>
<text x="693" y="10.3" text-anchor="middle" font-family="Liberation Sans" font-size="10.5" font-weight="bold" fill="#000">48</text>
<g transform="translate(630.3,32.5) rotate(0)"><rect x="-10.5" y="-5.5" width="21" height="11" rx="0" fill="#0070c0" stroke="#000" stroke-width="1.7"/></g>
<text x="630.3" y="36.3" text-anchor="middle" font-family="Liberation Sans" font-size="10.5" font-weight="bold" fill="#fff">5</text>
<g transform="translate(665,32.5) rotate(-5)"><rect x="-7.5" y="-8.5" width="15" height="17" rx="0" fill="#e6b9b8" stroke="#4f6228" stroke-width="1.7"/></g>
<text x="665" y="36.3" text-anchor="middle" font-family="Liberation Sans" font-size="10.5" font-weight="bold" fill="#000">59</text>
<circle cx="689" cy="32.4" r="7.6" fill="#b3a2c7" stroke="#4f6228" stroke-width="1.4"/>
<text x="689" y="36.2" text-anchor="middle" font-family="Liberation Sans" font-size="10.5" font-weight="bold" fill="#000">26</text>
<circle cx="673.4" cy="53.4" r="7.6" fill="#b3a2c7" stroke="#4f6228" stroke-width="1.4"/>
<text x="673.4" y="57.2" text-anchor="middle" font-family="Liberation Sans" font-size="10.5" font-weight="bold" fill="#000">25</text>
<circle cx="656.5" cy="74.7" r="7.6" fill="#b3a2c7" stroke="#4f6228" stroke-width="1.4"/>
<text x="656.5" y="78.5" text-anchor="middle" font-family="Liberation Sans" font-size="10.5" font-weight="bold" fill="#000">28</text>
<g transform="translate(615.5,97.6) rotate(30)"><rect x="-18.5" y="-24.0" width="37" height="48" rx="0" fill="#b3a2c7" stroke="#7f7f7f" stroke-width="1.7"/></g>
<text x="615.5" y="101.4" text-anchor="middle" font-family="Liberation Sans" font-size="10.5" font-weight="bold" fill="#000">23</text>
<g transform="translate(641,116.2) rotate(35)"><rect x="-7.5" y="-7.5" width="15" height="15" rx="0" fill="#ffc000" stroke="#7f7f7f" stroke-width="1.7"/></g>
<text x="641" y="120.0" text-anchor="middle" font-family="Liberation Sans" font-size="10.5" font-weight="bold" fill="#000">42</text>
<circle cx="646.6" cy="139.5" r="9.7" fill="#ebf1de" stroke="#4f6228" stroke-width="1.3"/>
<text x="646.6" y="143.5" text-anchor="middle" font-family="Liberation Sans" font-size="11" font-weight="bold" fill="#000">7</text>
<g transform="translate(620,148.5) rotate(-15)"><rect x="-8.0" y="-8.0" width="16" height="16" rx="0" fill="#e6b9b8" stroke="#4f6228" stroke-width="1.7"/></g>
<text x="620" y="152.3" text-anchor="middle" font-family="Liberation Sans" font-size="10.5" font-weight="bold" fill="#000">53</text>
<g transform="translate(569.6,141.5) rotate(0)"><rect x="-7.8" y="-17.4" width="15.5" height="34.7" rx="0" fill="#ff0000" stroke="#000" stroke-width="1.7"/></g>
<text x="569.6" y="147.8" text-anchor="middle" font-family="Liberation Sans" font-size="10.5" font-weight="bold" fill="#000">20</text>
<g transform="translate(619.3,181.8) rotate(0)"><rect x="-33.6" y="-15.2" width="67.3" height="30.5" rx="0" fill="#9bbb59" stroke="#7f7f7f" stroke-width="1.7"/></g>
<text x="619.3" y="185.6" text-anchor="middle" font-family="Liberation Sans" font-size="10.5" font-weight="bold" fill="#000">33</text>
<g transform="translate(667.2,183) rotate(0)"><rect x="-7.0" y="-9.0" width="14.1" height="18" rx="0" fill="#ffc000" stroke="#7f7f7f" stroke-width="1.7"/></g>
<text x="667.2" y="186.8" text-anchor="middle" font-family="Liberation Sans" font-size="10.5" font-weight="bold" fill="#000">46</text>
<g transform="translate(669.6,213.8) rotate(5)"><rect x="-8.8" y="-13.5" width="17.5" height="27" rx="0" fill="#fff" stroke="#000" stroke-width="1.7"/></g>
<text x="669.6" y="217.6" text-anchor="middle" font-family="Liberation Sans" font-size="10.5" font-weight="normal" fill="#000">65</text>
<g transform="translate(711.8,222) rotate(0)"><rect x="-18.8" y="-37.5" width="37.6" height="75" rx="17" fill="#dbeef4" stroke="#000" stroke-width="1.6"/></g>
<text x="711.8" y="225.8" text-anchor="middle" font-family="Liberation Sans" font-size="10.5" font-weight="bold" fill="#000">32</text>
<g transform="translate(687.8,283.2) rotate(35)"><rect x="-9.0" y="-8.0" width="18" height="16" rx="0" fill="#0070c0" stroke="#000" stroke-width="1.7"/></g>
<text x="687.8" y="287.0" text-anchor="middle" font-family="Liberation Sans" font-size="10.5" font-weight="bold" fill="#fff">2</text>
<g transform="translate(724.2,288.7) rotate(-8)"><rect x="-12.0" y="-12.3" width="24" height="24.7" rx="0" fill="#ffff00" stroke="#000" stroke-width="1.7"/></g>
<text x="724.2" y="292.5" text-anchor="middle" font-family="Liberation Sans" font-size="10.5" font-weight="bold" fill="#000">36</text>
<g transform="translate(762.7,219.8) rotate(30)"><rect x="-9.5" y="-9.5" width="19" height="19" rx="0" fill="#ffc000" stroke="#7f7f7f" stroke-width="1.7"/></g>
<text x="762.7" y="223.6" text-anchor="middle" font-family="Liberation Sans" font-size="10.5" font-weight="bold" fill="#000">43</text>
<g transform="translate(751.4,243.4) rotate(30)"><rect x="-7.8" y="-7.8" width="15.5" height="15.5" rx="0" fill="#e6b9b8" stroke="#4f6228" stroke-width="1.7"/></g>
<text x="751.4" y="247.2" text-anchor="middle" font-family="Liberation Sans" font-size="10.5" font-weight="bold" fill="#000">57</text>
<g transform="translate(779,237.5) rotate(25)"><rect x="-8.5" y="-8.5" width="17" height="17" rx="0" fill="#0070c0" stroke="#000" stroke-width="1.7"/></g>
<text x="779" y="241.3" text-anchor="middle" font-family="Liberation Sans" font-size="10.5" font-weight="bold" fill="#fff">8</text>
<g transform="translate(811.4,220) rotate(-16)"><rect x="-13.7" y="-8.7" width="27.3" height="17.3" rx="0" fill="#fff" stroke="#000" stroke-width="1.7"/></g>
<text x="811.4" y="223.8" text-anchor="middle" font-family="Liberation Sans" font-size="10.5" font-weight="bold" fill="#000">50</text>
<g transform="translate(780.1,300) rotate(32)"><rect x="-9.5" y="-7.8" width="19" height="15.5" rx="0" fill="#0070c0" stroke="#000" stroke-width="1.7"/></g>
<text x="780.1" y="303.8" text-anchor="middle" font-family="Liberation Sans" font-size="10.5" font-weight="bold" fill="#fff">1</text>
<circle cx="742.4" cy="11.8" r="18.6" fill="#b3a2c7" stroke="#000" stroke-width="1.4"/>
<text x="742.4" y="15.6" text-anchor="middle" font-family="Liberation Sans" font-size="10.5" font-weight="bold" fill="#000">21</text>
<g transform="translate(764.9,43.6) rotate(40)"><rect x="-7.5" y="-7.5" width="15" height="15" rx="0" fill="#ffc000" stroke="#7f7f7f" stroke-width="1.7"/></g>
<text x="764.9" y="47.4" text-anchor="middle" font-family="Liberation Sans" font-size="10.5" font-weight="bold" fill="#000">40</text>
<g transform="translate(816.4,39.8) rotate(0)"><rect x="-15.2" y="-34.7" width="30.5" height="69.4" rx="0" fill="#ffc000" stroke="#7f7f7f" stroke-width="1.7"/></g>
<text x="816.4" y="36.3" text-anchor="middle" font-family="Liberation Sans" font-size="10.5" font-weight="bold" fill="#000">41</text>
<g transform="translate(808,66) rotate(0)"><rect x="-6.8" y="-8.5" width="13.6" height="17" rx="0" fill="#ffc000" stroke="#7f7f7f" stroke-width="1.7"/></g>
<text x="808" y="69.8" text-anchor="middle" font-family="Liberation Sans" font-size="10.5" font-weight="bold" fill="#000">62</text>
<g transform="translate(763.2,77.4) rotate(30)"><rect x="-9.5" y="-9.5" width="19" height="19" rx="0" fill="#0070c0" stroke="#000" stroke-width="1.7"/></g>
<text x="763.2" y="81.2" text-anchor="middle" font-family="Liberation Sans" font-size="10.5" font-weight="bold" fill="#fff">24</text>
<g transform="translate(835.5,93.5) rotate(40)"><rect x="-9.5" y="-9.5" width="19" height="19" rx="0" fill="#fff" stroke="#000" stroke-width="1.7"/></g>
<text x="835.5" y="97.3" text-anchor="middle" font-family="Liberation Sans" font-size="10.5" font-weight="bold" fill="#000">51</text>
<g transform="translate(851.6,110.7) rotate(40)"><rect x="-12.0" y="-12.0" width="24" height="24" rx="0" fill="#ffff00" stroke="#000" stroke-width="1.7"/></g>
<text x="851.6" y="114.5" text-anchor="middle" font-family="Liberation Sans" font-size="10.5" font-weight="bold" fill="#000">35</text>
<g transform="translate(903.9,18) rotate(0)"><rect x="-8.3" y="-13.2" width="16.6" height="26.3" rx="0" fill="#ffc000" stroke="#7f7f7f" stroke-width="1.7"/></g>
<text x="903.9" y="21.8" text-anchor="middle" font-family="Liberation Sans" font-size="10.5" font-weight="bold" fill="#000">61</text>
<g transform="translate(903.9,61.2) rotate(0)"><rect x="-8.3" y="-12.2" width="16.6" height="24.5" rx="0" fill="#ffc000" stroke="#7f7f7f" stroke-width="1.7"/></g>
<text x="903.9" y="65.0" text-anchor="middle" font-family="Liberation Sans" font-size="10.5" font-weight="bold" fill="#000">47</text>
<polygon points="957.9,17.7 984.9,32.1 990,55.8 981.5,71 940.9,47.3" fill="#22e4fc" stroke="#000" stroke-width="1.3"/>
<text x="966" y="48.0" text-anchor="middle" font-family="Liberation Sans" font-size="11" font-weight="bold" fill="#fff">64</text>
<g transform="translate(928.3,42.3) rotate(15)"><rect x="-7.0" y="-5.5" width="14" height="11" rx="0" fill="#e6b9b8" stroke="#4f6228" stroke-width="1.7"/></g>
<text x="928.3" y="46.1" text-anchor="middle" font-family="Liberation Sans" font-size="10.5" font-weight="bold" fill="#000">55</text>
<g transform="translate(941,98.8) rotate(3)"><rect x="-17.8" y="-8.4" width="35.5" height="16.9" rx="0" fill="#b3a2c7" stroke="#000" stroke-width="1.7"/></g>
<text x="941" y="102.6" text-anchor="middle" font-family="Liberation Sans" font-size="10.5" font-weight="bold" fill="#000">4</text>
<g transform="translate(977.7,109.6) rotate(15)"><rect x="-7.5" y="-16.5" width="15" height="33" rx="0" fill="#b3a2c7" stroke="#000" stroke-width="1.7"/></g>
<text x="977.7" y="113.4" text-anchor="middle" font-family="Liberation Sans" font-size="10.5" font-weight="bold" fill="#000">29</text>
<g transform="translate(892.5,121.3) rotate(-39)"><rect x="-16.9" y="-7.5" width="33.7" height="15" rx="0" fill="#b3a2c7" stroke="#000" stroke-width="1.7"/></g>
<text x="892.5" y="125.1" text-anchor="middle" font-family="Liberation Sans" font-size="10.5" font-weight="bold" fill="#000">81</text>
<circle cx="988" cy="139.4" r="9.8" fill="#ebf1de" stroke="#4f6228" stroke-width="1.3"/>
<text x="988" y="143.4" text-anchor="middle" font-family="Liberation Sans" font-size="11" font-weight="bold" fill="#000">6</text>
<g transform="translate(939.3,157.2) rotate(-28)"><rect x="-13.0" y="-9.0" width="26" height="18" rx="0" fill="#0070c0" stroke="#000" stroke-width="1.7"/></g>
<text x="939.3" y="161.0" text-anchor="middle" font-family="Liberation Sans" font-size="10.5" font-weight="bold" fill="#fff">30</text>
<g transform="translate(954.9,218.2) rotate(-14)"><rect x="-26.0" y="-8.2" width="52" height="16.3" rx="0" fill="#9bbb59" stroke="#7f7f7f" stroke-width="1.7"/></g>
<text x="954.9" y="222.0" text-anchor="middle" font-family="Liberation Sans" font-size="10.5" font-weight="bold" fill="#000">34</text>
<g transform="translate(903.7,247.7) rotate(45)"><rect x="-11.3" y="-11.3" width="22.6" height="22.6" rx="0" fill="#fff" stroke="#000" stroke-width="1.7"/></g>
<text x="903.7" y="251.5" text-anchor="middle" font-family="Liberation Sans" font-size="10.5" font-weight="normal" fill="#000">66</text>
<text x="957.5" y="278.5" text-anchor="middle" font-family="Liberation Sans" font-size="11" font-weight="bold" fill="#000">63</text>
</g>
<rect x="545" y="0" width="4" height="352" fill="#000"/>
<text x="739.5" y="385.7" font-family="Liberation Serif" font-size="17.3" font-weight="bold" fill="#fff" stroke="#fff" stroke-width="0.12" textLength="119.0" lengthAdjust="spacingAndGlyphs" >Colour Menu</text>
<text x="569.2" y="409.3" font-family="Liberation Serif" font-size="17.3" font-weight="normal" fill="#fff" stroke="#fff" stroke-width="0.12" textLength="84.0" lengthAdjust="spacingAndGlyphs" >Movement</text>
<defs><linearGradient id="mv0"><stop offset="0.0" stop-color="#0b430b"/><stop offset="0.1" stop-color="#095609"/><stop offset="0.2" stop-color="#066906"/><stop offset="0.3" stop-color="#027f02"/><stop offset="0.4" stop-color="#009200"/><stop offset="0.5" stop-color="#00a200"/><stop offset="0.6" stop-color="#00b300"/><stop offset="0.7" stop-color="#00c400"/><stop offset="0.8" stop-color="#00d500"/><stop offset="0.9" stop-color="#00e600"/><stop offset="1.0" stop-color="#00f600"/></linearGradient><linearGradient id="mv1"><stop offset="0.0" stop-color="#0c460c"/><stop offset="0.1" stop-color="#0a580a"/><stop offset="0.2" stop-color="#086c08"/><stop offset="0.3" stop-color="#038103"/><stop offset="0.4" stop-color="#009500"/><stop offset="0.5" stop-color="#00a600"/><stop offset="0.6" stop-color="#00b700"/><stop offset="0.7" stop-color="#00c700"/><stop offset="0.8" stop-color="#00d800"/><stop offset="0.9" stop-color="#00e900"/><stop offset="1.0" stop-color="#00fa00"/></linearGradient><linearGradient id="mv2"><stop offset="0.0" stop-color="#0d480d"/><stop offset="0.1" stop-color="#0c5a0c"/><stop offset="0.2" stop-color="#096e09"/><stop offset="0.3" stop-color="#048304"/><stop offset="0.4" stop-color="#009800"/><stop offset="0.5" stop-color="#00a900"/><stop offset="0.6" stop-color="#00ba00"/><stop offset="0.7" stop-color="#00cb00"/><stop offset="0.8" stop-color="#00dc00"/><stop offset="0.9" stop-color="#00ec00"/><stop offset="1.0" stop-color="#00fd00"/></linearGradient><linearGradient id="mv3"><stop offset="0.0" stop-color="#0e4a0e"/><stop offset="0.1" stop-color="#0d5c0d"/><stop offset="0.2" stop-color="#0a700a"/><stop offset="0.3" stop-color="#068506"/><stop offset="0.4" stop-color="#009c00"/><stop offset="0.5" stop-color="#00ac00"/><stop offset="0.6" stop-color="#00bd00"/><stop offset="0.7" stop-color="#00ce00"/><stop offset="0.8" stop-color="#00df00"/><stop offset="0.9" stop-color="#00f000"/><stop offset="1.0" stop-color="#02ff02"/></linearGradient><linearGradient id="mv4"><stop offset="0.0" stop-color="#104c10"/><stop offset="0.1" stop-color="#0e5e0e"/><stop offset="0.2" stop-color="#0b720b"/><stop offset="0.3" stop-color="#078707"/><stop offset="0.4" stop-color="#019e01"/><stop offset="0.5" stop-color="#00b000"/><stop offset="0.6" stop-color="#00c100"/><stop offset="0.7" stop-color="#00d100"/><stop offset="0.8" stop-color="#00e200"/><stop offset="0.9" stop-color="#00f300"/><stop offset="1.0" stop-color="#05ff05"/></linearGradient><linearGradient id="mv5"><stop offset="0.0" stop-color="#114e11"/><stop offset="0.1" stop-color="#106010"/><stop offset="0.2" stop-color="#0d740d"/><stop offset="0.3" stop-color="#088908"/><stop offset="0.4" stop-color="#03a003"/><stop offset="0.5" stop-color="#00b300"/><stop offset="0.6" stop-color="#00c400"/><stop offset="0.7" stop-color="#00d500"/><stop offset="0.8" stop-color="#00e600"/><stop offset="0.9" stop-color="#00f600"/><stop offset="1.0" stop-color="#08ff08"/></linearGradient><linearGradient id="mv6"><stop offset="0.0" stop-color="#135013"/><stop offset="0.1" stop-color="#116211"/><stop offset="0.2" stop-color="#0e760e"/><stop offset="0.3" stop-color="#0a8b0a"/><stop offset="0.4" stop-color="#04a204"/><stop offset="0.5" stop-color="#00b700"/><stop offset="0.6" stop-color="#00c700"/><stop offset="0.7" stop-color="#00d800"/><stop offset="0.8" stop-color="#00e900"/><stop offset="0.9" stop-color="#00fa00"/><stop offset="1.0" stop-color="#0cff0c"/></linearGradient><linearGradient id="mv7"><stop offset="0.0" stop-color="#145214"/><stop offset="0.1" stop-color="#126412"/><stop offset="0.2" stop-color="#107810"/><stop offset="0.3" stop-color="#0b8d0b"/><stop offset="0.4" stop-color="#05a405"/><stop offset="0.5" stop-color="#00ba00"/><stop offset="0.6" stop-color="#00cb00"/><stop offset="0.7" stop-color="#00dc00"/><stop offset="0.8" stop-color="#00ec00"/><stop offset="0.9" stop-color="#00fd00"/><stop offset="1.0" stop-color="#0fff0f"/></linearGradient><linearGradient id="mv8"><stop offset="0.0" stop-color="#165416"/><stop offset="0.1" stop-color="#146614"/><stop offset="0.2" stop-color="#117a11"/><stop offset="0.3" stop-color="#0d8f0d"/><stop offset="0.4" stop-color="#07a507"/><stop offset="0.5" stop-color="#00bd00"/><stop offset="0.6" stop-color="#00ce00"/><stop offset="0.7" stop-color="#00df00"/><stop offset="0.8" stop-color="#00f000"/><stop offset="0.9" stop-color="#02ff02"/><stop offset="1.0" stop-color="#12ff12"/></linearGradient><linearGradient id="mv9"><stop offset="0.0" stop-color="#175517"/><stop offset="0.1" stop-color="#166816"/><stop offset="0.2" stop-color="#137c13"/><stop offset="0.3" stop-color="#0e910e"/><stop offset="0.4" stop-color="#09a709"/><stop offset="0.5" stop-color="#02bf02"/><stop offset="0.6" stop-color="#00d100"/><stop offset="0.7" stop-color="#00e200"/><stop offset="0.8" stop-color="#00f300"/><stop offset="0.9" stop-color="#05ff05"/><stop offset="1.0" stop-color="#16ff16"/></linearGradient><linearGradient id="mv10"><stop offset="0.0" stop-color="#195719"/><stop offset="0.1" stop-color="#176917"/><stop offset="0.2" stop-color="#147d14"/><stop offset="0.3" stop-color="#109210"/><stop offset="0.4" stop-color="#0aa90a"/><stop offset="0.5" stop-color="#03c103"/><stop offset="0.6" stop-color="#00d500"/><stop offset="0.7" stop-color="#00e600"/><stop offset="0.8" stop-color="#00f600"/><stop offset="0.9" stop-color="#08ff08"/><stop offset="1.0" stop-color="#19ff19"/></linearGradient><linearGradient id="mv11"><stop offset="0.0" stop-color="#1a591a"/><stop offset="0.1" stop-color="#196b19"/><stop offset="0.2" stop-color="#167f16"/><stop offset="0.3" stop-color="#129412"/><stop offset="0.4" stop-color="#0cab0c"/><stop offset="0.5" stop-color="#05c305"/><stop offset="0.6" stop-color="#00d800"/><stop offset="0.7" stop-color="#00e900"/><stop offset="0.8" stop-color="#00fa00"/><stop offset="0.9" stop-color="#0cff0c"/><stop offset="1.0" stop-color="#1dff1d"/></linearGradient><linearGradient id="mv12"><stop offset="0.0" stop-color="#1c5a1c"/><stop offset="0.1" stop-color="#1b6d1b"/><stop offset="0.2" stop-color="#188118"/><stop offset="0.3" stop-color="#139613"/><stop offset="0.4" stop-color="#0eac0e"/><stop offset="0.5" stop-color="#07c407"/><stop offset="0.6" stop-color="#00dc00"/><stop offset="0.7" stop-color="#00ec00"/><stop offset="0.8" stop-color="#00fd00"/><stop offset="0.9" stop-color="#0fff0f"/><stop offset="1.0" stop-color="#20ff20"/></linearGradient><linearGradient id="mv13"><stop offset="0.0" stop-color="#1e5c1e"/><stop offset="0.1" stop-color="#1c6e1c"/><stop offset="0.2" stop-color="#198219"/><stop offset="0.3" stop-color="#159715"/><stop offset="0.4" stop-color="#0fae0f"/><stop offset="0.5" stop-color="#08c608"/><stop offset="0.6" stop-color="#00df00"/><stop offset="0.7" stop-color="#00f000"/><stop offset="0.8" stop-color="#02ff02"/><stop offset="0.9" stop-color="#12ff12"/><stop offset="1.0" stop-color="#23ff23"/></linearGradient><linearGradient id="mv14"><stop offset="0.0" stop-color="#205d20"/><stop offset="0.1" stop-color="#1e701e"/><stop offset="0.2" stop-color="#1b841b"/><stop offset="0.3" stop-color="#179917"/><stop offset="0.4" stop-color="#11af11"/><stop offset="0.5" stop-color="#0ac70a"/><stop offset="0.6" stop-color="#02e002"/><stop offset="0.7" stop-color="#00f300"/><stop offset="0.8" stop-color="#05ff05"/><stop offset="0.9" stop-color="#16ff16"/><stop offset="1.0" stop-color="#27ff27"/></linearGradient><linearGradient id="mv15"><stop offset="0.0" stop-color="#225f22"/><stop offset="0.1" stop-color="#207120"/><stop offset="0.2" stop-color="#1d851d"/><stop offset="0.3" stop-color="#199a19"/><stop offset="0.4" stop-color="#13b113"/><stop offset="0.5" stop-color="#0cc90c"/><stop offset="0.6" stop-color="#04e204"/><stop offset="0.7" stop-color="#00f600"/><stop offset="0.8" stop-color="#08ff08"/><stop offset="0.9" stop-color="#19ff19"/><stop offset="1.0" stop-color="#2aff2a"/></linearGradient><linearGradient id="mv16"><stop offset="0.0" stop-color="#246024"/><stop offset="0.1" stop-color="#227322"/><stop offset="0.2" stop-color="#1f861f"/><stop offset="0.3" stop-color="#1b9c1b"/><stop offset="0.4" stop-color="#15b215"/><stop offset="0.5" stop-color="#0eca0e"/><stop offset="0.6" stop-color="#06e306"/><stop offset="0.7" stop-color="#00fa00"/><stop offset="0.8" stop-color="#0cff0c"/><stop offset="0.9" stop-color="#1dff1d"/><stop offset="1.0" stop-color="#2dff2d"/></linearGradient><linearGradient id="mv17"><stop offset="0.0" stop-color="#266226"/><stop offset="0.1" stop-color="#247424"/><stop offset="0.2" stop-color="#218821"/><stop offset="0.3" stop-color="#1d9d1d"/><stop offset="0.4" stop-color="#17b417"/><stop offset="0.5" stop-color="#10cb10"/><stop offset="0.6" stop-color="#08e508"/><stop offset="0.7" stop-color="#00fd00"/><stop offset="0.8" stop-color="#0fff0f"/><stop offset="0.9" stop-color="#20ff20"/><stop offset="1.0" stop-color="#31ff31"/></linearGradient><linearGradient id="mv18"><stop offset="0.0" stop-color="#286328"/><stop offset="0.1" stop-color="#267526"/><stop offset="0.2" stop-color="#238923"/><stop offset="0.3" stop-color="#1f9e1f"/><stop offset="0.4" stop-color="#19b519"/><stop offset="0.5" stop-color="#12cd12"/><stop offset="0.6" stop-color="#0ae60a"/><stop offset="0.7" stop-color="#02ff02"/><stop offset="0.8" stop-color="#12ff12"/><stop offset="0.9" stop-color="#23ff23"/><stop offset="1.0" stop-color="#34ff34"/></linearGradient><linearGradient id="mv19"><stop offset="0.0" stop-color="#2a642a"/><stop offset="0.1" stop-color="#287728"/><stop offset="0.2" stop-color="#258a25"/><stop offset="0.3" stop-color="#21a021"/><stop offset="0.4" stop-color="#1bb61b"/><stop offset="0.5" stop-color="#14ce14"/><stop offset="0.6" stop-color="#0ce70c"/><stop offset="0.7" stop-color="#07fd07"/><stop offset="0.8" stop-color="#16ff16"/><stop offset="0.9" stop-color="#27ff27"/><stop offset="1.0" stop-color="#37ff37"/></linearGradient><linearGradient id="mv20"><stop offset="0.0" stop-color="#2c652c"/><stop offset="0.1" stop-color="#2b782b"/><stop offset="0.2" stop-color="#288c28"/><stop offset="0.3" stop-color="#23a123"/><stop offset="0.4" stop-color="#1eb71e"/><stop offset="0.5" stop-color="#17cf17"/><stop offset="0.6" stop-color="#0ee80e"/><stop offset="0.7" stop-color="#0cfb0c"/><stop offset="0.8" stop-color="#19ff19"/><stop offset="0.9" stop-color="#2aff2a"/><stop offset="1.0" stop-color="#3bff3b"/></linearGradient><linearGradient id="mv21"><stop offset="0.0" stop-color="#2e672e"/><stop offset="0.1" stop-color="#2d792d"/><stop offset="0.2" stop-color="#2a8d2a"/><stop offset="0.3" stop-color="#26a226"/><stop offset="0.4" stop-color="#20b820"/><stop offset="0.5" stop-color="#19d019"/><stop offset="0.6" stop-color="#10ea10"/><stop offset="0.7" stop-color="#12f912"/><stop offset="0.8" stop-color="#1dff1d"/><stop offset="0.9" stop-color="#2dff2d"/><stop offset="1.0" stop-color="#3eff3e"/></linearGradient><linearGradient id="mv22"><stop offset="0.0" stop-color="#316831"/><stop offset="0.1" stop-color="#2f7a2f"/><stop offset="0.2" stop-color="#2c8e2c"/><stop offset="0.3" stop-color="#28a328"/><stop offset="0.4" stop-color="#22b922"/><stop offset="0.5" stop-color="#1bd11b"/><stop offset="0.6" stop-color="#13eb13"/><stop offset="0.7" stop-color="#17f717"/><stop offset="0.8" stop-color="#20ff20"/><stop offset="0.9" stop-color="#31ff31"/><stop offset="1.0" stop-color="#42ff42"/></linearGradient><linearGradient id="mv23"><stop offset="0.0" stop-color="#336933"/><stop offset="0.1" stop-color="#317b31"/><stop offset="0.2" stop-color="#2f8f2f"/><stop offset="0.3" stop-color="#2aa42a"/><stop offset="0.4" stop-color="#24ba24"/><stop offset="0.5" stop-color="#1dd21d"/><stop offset="0.6" stop-color="#16ea16"/><stop offset="0.7" stop-color="#1cf51c"/><stop offset="0.8" stop-color="#23ff23"/><stop offset="0.9" stop-color="#34ff34"/><stop offset="1.0" stop-color="#45ff45"/></linearGradient><linearGradient id="mv24"><stop offset="0.0" stop-color="#356a35"/><stop offset="0.1" stop-color="#347c34"/><stop offset="0.2" stop-color="#319031"/><stop offset="0.3" stop-color="#2da52d"/><stop offset="0.4" stop-color="#27bb27"/><stop offset="0.5" stop-color="#20d320"/><stop offset="0.6" stop-color="#1be91b"/><stop offset="0.7" stop-color="#21f421"/><stop offset="0.8" stop-color="#28fd28"/><stop offset="0.9" stop-color="#37ff37"/><stop offset="1.0" stop-color="#48ff48"/></linearGradient><linearGradient id="mv25"><stop offset="0.0" stop-color="#386a38"/><stop offset="0.1" stop-color="#367d36"/><stop offset="0.2" stop-color="#339133"/><stop offset="0.3" stop-color="#2fa62f"/><stop offset="0.4" stop-color="#29bc29"/><stop offset="0.5" stop-color="#22d422"/><stop offset="0.6" stop-color="#21e721"/><stop offset="0.7" stop-color="#26f226"/><stop offset="0.8" stop-color="#2dfc2d"/><stop offset="0.9" stop-color="#3bff3b"/><stop offset="1.0" stop-color="#4cff4c"/></linearGradient><linearGradient id="mv26"><stop offset="0.0" stop-color="#3a6b3a"/><stop offset="0.1" stop-color="#397e39"/><stop offset="0.2" stop-color="#369136"/><stop offset="0.3" stop-color="#32a732"/><stop offset="0.4" stop-color="#2cbd2c"/><stop offset="0.5" stop-color="#25d525"/><stop offset="0.6" stop-color="#26e526"/><stop offset="0.7" stop-color="#2bf02b"/><stop offset="0.8" stop-color="#32fa32"/><stop offset="0.9" stop-color="#3eff3e"/><stop offset="1.0" stop-color="#4fff4f"/></linearGradient><linearGradient id="mv27"><stop offset="0.0" stop-color="#3d6c3d"/><stop offset="0.1" stop-color="#3b7f3b"/><stop offset="0.2" stop-color="#389238"/><stop offset="0.3" stop-color="#34a734"/><stop offset="0.4" stop-color="#2ebe2e"/><stop offset="0.5" stop-color="#27d627"/><stop offset="0.6" stop-color="#2be42b"/><stop offset="0.7" stop-color="#30ef30"/><stop offset="0.8" stop-color="#37f837"/><stop offset="0.9" stop-color="#42ff42"/><stop offset="1.0" stop-color="#52ff52"/></linearGradient><linearGradient id="mv28"><stop offset="0.0" stop-color="#406d40"/><stop offset="0.1" stop-color="#3e7f3e"/><stop offset="0.2" stop-color="#3b933b"/><stop offset="0.3" stop-color="#37a837"/><stop offset="0.4" stop-color="#31bf31"/><stop offset="0.5" stop-color="#2bd62b"/><stop offset="0.6" stop-color="#2fe22f"/><stop offset="0.7" stop-color="#35ed35"/><stop offset="0.8" stop-color="#3cf73c"/><stop offset="0.9" stop-color="#45ff45"/><stop offset="1.0" stop-color="#56ff56"/></linearGradient><linearGradient id="mv29"><stop offset="0.0" stop-color="#426e42"/><stop offset="0.1" stop-color="#418041"/><stop offset="0.2" stop-color="#3e943e"/><stop offset="0.3" stop-color="#39a939"/><stop offset="0.4" stop-color="#34bf34"/><stop offset="0.5" stop-color="#30d430"/><stop offset="0.6" stop-color="#34e034"/><stop offset="0.7" stop-color="#3aec3a"/><stop offset="0.8" stop-color="#41f541"/><stop offset="0.9" stop-color="#4afe4a"/><stop offset="1.0" stop-color="#59ff59"/></linearGradient><linearGradient id="mv30"><stop offset="0.0" stop-color="#456e45"/><stop offset="0.1" stop-color="#438143"/><stop offset="0.2" stop-color="#419441"/><stop offset="0.3" stop-color="#3ca93c"/><stop offset="0.4" stop-color="#36c036"/><stop offset="0.5" stop-color="#35d335"/><stop offset="0.6" stop-color="#39df39"/><stop offset="0.7" stop-color="#3fea3f"/><stop offset="0.8" stop-color="#46f446"/><stop offset="0.9" stop-color="#4ffc4f"/><stop offset="1.0" stop-color="#5cff5c"/></linearGradient><linearGradient id="mv31"><stop offset="0.0" stop-color="#486f48"/><stop offset="0.1" stop-color="#468146"/><stop offset="0.2" stop-color="#439543"/><stop offset="0.3" stop-color="#3faa3f"/><stop offset="0.4" stop-color="#39c139"/><stop offset="0.5" stop-color="#39d139"/><stop offset="0.6" stop-color="#3ede3e"/><stop offset="0.7" stop-color="#44e944"/><stop offset="0.8" stop-color="#4bf24b"/><stop offset="0.9" stop-color="#53fb53"/><stop offset="1.0" stop-color="#60ff60"/></linearGradient><linearGradient id="mv32"><stop offset="0.0" stop-color="#4b6f4b"/><stop offset="0.1" stop-color="#498249"/><stop offset="0.2" stop-color="#469546"/><stop offset="0.3" stop-color="#42ab42"/><stop offset="0.4" stop-color="#3cc13c"/><stop offset="0.5" stop-color="#3ed03e"/><stop offset="0.6" stop-color="#43dc43"/><stop offset="0.7" stop-color="#48e748"/><stop offset="0.8" stop-color="#4ff14f"/><stop offset="0.9" stop-color="#58f958"/><stop offset="1.0" stop-color="#63ff63"/></linearGradient><linearGradient id="mv33"><stop offset="0.0" stop-color="#4e704e"/><stop offset="0.1" stop-color="#4c824c"/><stop offset="0.2" stop-color="#499649"/><stop offset="0.3" stop-color="#45ab45"/><stop offset="0.4" stop-color="#40c140"/><stop offset="0.5" stop-color="#43cf43"/><stop offset="0.6" stop-color="#47db47"/><stop offset="0.7" stop-color="#4de64d"/><stop offset="0.8" stop-color="#54f054"/><stop offset="0.9" stop-color="#5df85d"/><stop offset="1.0" stop-color="#67ff67"/></linearGradient><linearGradient id="mv34"><stop offset="0.0" stop-color="#507050"/><stop offset="0.1" stop-color="#4f834f"/><stop offset="0.2" stop-color="#4c964c"/><stop offset="0.3" stop-color="#48ab48"/><stop offset="0.4" stop-color="#44c044"/><stop offset="0.5" stop-color="#47cd47"/><stop offset="0.6" stop-color="#4cda4c"/><stop offset="0.7" stop-color="#52e552"/><stop offset="0.8" stop-color="#59ef59"/><stop offset="0.9" stop-color="#61f761"/><stop offset="1.0" stop-color="#6bfe6b"/></linearGradient><linearGradient id="mv35"><stop offset="0.0" stop-color="#547054"/><stop offset="0.1" stop-color="#528352"/><stop offset="0.2" stop-color="#4f974f"/><stop offset="0.3" stop-color="#4bac4b"/><stop offset="0.4" stop-color="#49be49"/><stop offset="0.5" stop-color="#4ccc4c"/><stop offset="0.6" stop-color="#50d950"/><stop offset="0.7" stop-color="#56e456"/><stop offset="0.8" stop-color="#5ded5d"/><stop offset="0.9" stop-color="#66f666"/><stop offset="1.0" stop-color="#70fd70"/></linearGradient><linearGradient id="mv36"><stop offset="0.0" stop-color="#577157"/><stop offset="0.1" stop-color="#558355"/><stop offset="0.2" stop-color="#529752"/><stop offset="0.3" stop-color="#4eac4e"/><stop offset="0.4" stop-color="#4dbd4d"/><stop offset="0.5" stop-color="#50cb50"/><stop offset="0.6" stop-color="#55d855"/><stop offset="0.7" stop-color="#5be35b"/><stop offset="0.8" stop-color="#62ec62"/><stop offset="0.9" stop-color="#6af56a"/><stop offset="1.0" stop-color="#74fc74"/></linearGradient><linearGradient id="mv37"><stop offset="0.0" stop-color="#5a715a"/><stop offset="0.1" stop-color="#588358"/><stop offset="0.2" stop-color="#559755"/><stop offset="0.3" stop-color="#51ac51"/><stop offset="0.4" stop-color="#52bc52"/><stop offset="0.5" stop-color="#55ca55"/><stop offset="0.6" stop-color="#59d659"/><stop offset="0.7" stop-color="#5fe25f"/><stop offset="0.8" stop-color="#66eb66"/><stop offset="0.9" stop-color="#6ff46f"/><stop offset="1.0" stop-color="#79fa79"/></linearGradient><linearGradient id="mv38"><stop offset="0.0" stop-color="#5d715d"/><stop offset="0.1" stop-color="#5b845b"/><stop offset="0.2" stop-color="#589758"/><stop offset="0.3" stop-color="#55ac55"/><stop offset="0.4" stop-color="#56bb56"/><stop offset="0.5" stop-color="#59c959"/><stop offset="0.6" stop-color="#5ed55e"/><stop offset="0.7" stop-color="#63e163"/><stop offset="0.8" stop-color="#6bea6b"/><stop offset="0.9" stop-color="#73f373"/><stop offset="1.0" stop-color="#7df97d"/></linearGradient><linearGradient id="mv39"><stop offset="0.0" stop-color="#607160"/><stop offset="0.1" stop-color="#5f845f"/><stop offset="0.2" stop-color="#5c975c"/><stop offset="0.3" stop-color="#59ab59"/><stop offset="0.4" stop-color="#5bba5b"/><stop offset="0.5" stop-color="#5ec85e"/><stop offset="0.6" stop-color="#62d562"/><stop offset="0.7" stop-color="#68e068"/><stop offset="0.8" stop-color="#6fe96f"/><stop offset="0.9" stop-color="#77f277"/><stop offset="1.0" stop-color="#81f981"/></linearGradient><linearGradient id="mv40"><stop offset="0.0" stop-color="#637163"/><stop offset="0.1" stop-color="#628462"/><stop offset="0.2" stop-color="#5f985f"/><stop offset="0.3" stop-color="#5daa5d"/><stop offset="0.4" stop-color="#5fb95f"/><stop offset="0.5" stop-color="#62c762"/><stop offset="0.6" stop-color="#66d466"/><stop offset="0.7" stop-color="#6cdf6c"/><stop offset="0.8" stop-color="#73e873"/><stop offset="0.9" stop-color="#7cf17c"/><stop offset="1.0" stop-color="#85f885"/></linearGradient><linearGradient id="mv41"><stop offset="0.0" stop-color="#677167"/><stop offset="0.1" stop-color="#658465"/><stop offset="0.2" stop-color="#629862"/><stop offset="0.3" stop-color="#61a961"/><stop offset="0.4" stop-color="#63b863"/><stop offset="0.5" stop-color="#66c666"/><stop offset="0.6" stop-color="#6ad36a"/><stop offset="0.7" stop-color="#70de70"/><stop offset="0.8" stop-color="#77e877"/><stop offset="0.9" stop-color="#80f080"/><stop offset="1.0" stop-color="#8af78a"/></linearGradient><linearGradient id="mv42"><stop offset="0.0" stop-color="#6a716a"/><stop offset="0.1" stop-color="#698469"/><stop offset="0.2" stop-color="#669866"/><stop offset="0.3" stop-color="#66a866"/><stop offset="0.4" stop-color="#67b867"/><stop offset="0.5" stop-color="#6ac66a"/><stop offset="0.6" stop-color="#6fd26f"/><stop offset="0.7" stop-color="#74dd74"/><stop offset="0.8" stop-color="#7be77b"/><stop offset="0.9" stop-color="#84ef84"/><stop offset="1.0" stop-color="#8ef68e"/></linearGradient><linearGradient id="mv43"><stop offset="0.0" stop-color="#6e716e"/><stop offset="0.1" stop-color="#6c846c"/><stop offset="0.2" stop-color="#699769"/><stop offset="0.3" stop-color="#6aa86a"/><stop offset="0.4" stop-color="#6bb76b"/><stop offset="0.5" stop-color="#6ec56e"/><stop offset="0.6" stop-color="#73d173"/><stop offset="0.7" stop-color="#78dc78"/><stop offset="0.8" stop-color="#80e680"/><stop offset="0.9" stop-color="#88ee88"/><stop offset="1.0" stop-color="#92f592"/></linearGradient><linearGradient id="mv44"><stop offset="0.0" stop-color="#717171"/><stop offset="0.1" stop-color="#708470"/><stop offset="0.2" stop-color="#6d976d"/><stop offset="0.3" stop-color="#6ea76e"/><stop offset="0.4" stop-color="#6fb66f"/><stop offset="0.5" stop-color="#72c472"/><stop offset="0.6" stop-color="#77d177"/><stop offset="0.7" stop-color="#7cdc7c"/><stop offset="0.8" stop-color="#84e584"/><stop offset="0.9" stop-color="#8cee8c"/><stop offset="1.0" stop-color="#96f596"/></linearGradient><linearGradient id="mv45"><stop offset="0.0" stop-color="#737373"/><stop offset="0.1" stop-color="#738373"/><stop offset="0.2" stop-color="#719671"/><stop offset="0.3" stop-color="#72a672"/><stop offset="0.4" stop-color="#73b673"/><stop offset="0.5" stop-color="#76c476"/><stop offset="0.6" stop-color="#7bd07b"/><stop offset="0.7" stop-color="#80db80"/><stop offset="0.8" stop-color="#88e588"/><stop offset="0.9" stop-color="#90ed90"/><stop offset="1.0" stop-color="#9af49a"/></linearGradient><linearGradient id="mv46"><stop offset="0.0" stop-color="#757575"/><stop offset="0.1" stop-color="#778377"/><stop offset="0.2" stop-color="#759575"/><stop offset="0.3" stop-color="#76a676"/><stop offset="0.4" stop-color="#77b577"/><stop offset="0.5" stop-color="#7ac37a"/><stop offset="0.6" stop-color="#7fcf7f"/><stop offset="0.7" stop-color="#84db84"/><stop offset="0.8" stop-color="#8be48b"/><stop offset="0.9" stop-color="#94ed94"/><stop offset="1.0" stop-color="#9ef39e"/></linearGradient><linearGradient id="mv47"><stop offset="0.0" stop-color="#767676"/><stop offset="0.1" stop-color="#7a837a"/><stop offset="0.2" stop-color="#799579"/><stop offset="0.3" stop-color="#79a579"/><stop offset="0.4" stop-color="#7bb57b"/><stop offset="0.5" stop-color="#7ec27e"/><stop offset="0.6" stop-color="#82cf82"/><stop offset="0.7" stop-color="#88da88"/><stop offset="0.8" stop-color="#8fe48f"/><stop offset="0.9" stop-color="#98ec98"/><stop offset="1.0" stop-color="#a2f3a2"/></linearGradient><linearGradient id="mv48"><stop offset="0.0" stop-color="#787878"/><stop offset="0.1" stop-color="#7e827e"/><stop offset="0.2" stop-color="#7d947d"/><stop offset="0.3" stop-color="#7da57d"/><stop offset="0.4" stop-color="#7fb47f"/><stop offset="0.5" stop-color="#82c282"/><stop offset="0.6" stop-color="#86ce86"/><stop offset="0.7" stop-color="#8cda8c"/><stop offset="0.8" stop-color="#93e393"/><stop offset="0.9" stop-color="#9cec9c"/><stop offset="1.0" stop-color="#a6f2a6"/></linearGradient><linearGradient id="mv49"><stop offset="0.0" stop-color="#7a7a7a"/><stop offset="0.1" stop-color="#828282"/><stop offset="0.2" stop-color="#819481"/><stop offset="0.3" stop-color="#81a581"/><stop offset="0.4" stop-color="#83b483"/><stop offset="0.5" stop-color="#86c286"/><stop offset="0.6" stop-color="#8ace8a"/><stop offset="0.7" stop-color="#90d990"/><stop offset="0.8" stop-color="#97e397"/><stop offset="0.9" stop-color="#9feb9f"/><stop offset="1.0" stop-color="#a9f2a9"/></linearGradient></defs>
<rect x="559" y="414" width="200" height="4.05" fill="url(#mv0)"/>
<rect x="559" y="418" width="200" height="4.05" fill="url(#mv1)"/>
<rect x="559" y="422" width="200" height="4.05" fill="url(#mv2)"/>
<rect x="559" y="426" width="200" height="4.05" fill="url(#mv3)"/>
<rect x="559" y="430" width="200" height="4.05" fill="url(#mv4)"/>
<rect x="559" y="434" width="200" height="4.05" fill="url(#mv5)"/>
<rect x="559" y="438" width="200" height="4.05" fill="url(#mv6)"/>
<rect x="559" y="442" width="200" height="4.05" fill="url(#mv7)"/>
<rect x="559" y="446" width="200" height="4.05" fill="url(#mv8)"/>
<rect x="559" y="450" width="200" height="4.05" fill="url(#mv9)"/>
<rect x="559" y="454" width="200" height="4.05" fill="url(#mv10)"/>
<rect x="559" y="458" width="200" height="4.05" fill="url(#mv11)"/>
<rect x="559" y="462" width="200" height="4.05" fill="url(#mv12)"/>
<rect x="559" y="466" width="200" height="4.05" fill="url(#mv13)"/>
<rect x="559" y="470" width="200" height="4.05" fill="url(#mv14)"/>
<rect x="559" y="474" width="200" height="4.05" fill="url(#mv15)"/>
<rect x="559" y="478" width="200" height="4.05" fill="url(#mv16)"/>
<rect x="559" y="482" width="200" height="4.05" fill="url(#mv17)"/>
<rect x="559" y="486" width="200" height="4.05" fill="url(#mv18)"/>
<rect x="559" y="490" width="200" height="4.05" fill="url(#mv19)"/>
<rect x="559" y="494" width="200" height="4.05" fill="url(#mv20)"/>
<rect x="559" y="498" width="200" height="4.05" fill="url(#mv21)"/>
<rect x="559" y="502" width="200" height="4.05" fill="url(#mv22)"/>
<rect x="559" y="506" width="200" height="4.05" fill="url(#mv23)"/>
<rect x="559" y="510" width="200" height="4.05" fill="url(#mv24)"/>
<rect x="559" y="514" width="200" height="4.05" fill="url(#mv25)"/>
<rect x="559" y="518" width="200" height="4.05" fill="url(#mv26)"/>
<rect x="559" y="522" width="200" height="4.05" fill="url(#mv27)"/>
<rect x="559" y="526" width="200" height="4.05" fill="url(#mv28)"/>
<rect x="559" y="530" width="200" height="4.05" fill="url(#mv29)"/>
<rect x="559" y="534" width="200" height="4.05" fill="url(#mv30)"/>
<rect x="559" y="538" width="200" height="4.05" fill="url(#mv31)"/>
<rect x="559" y="542" width="200" height="4.05" fill="url(#mv32)"/>
<rect x="559" y="546" width="200" height="4.05" fill="url(#mv33)"/>
<rect x="559" y="550" width="200" height="4.05" fill="url(#mv34)"/>
<rect x="559" y="554" width="200" height="4.05" fill="url(#mv35)"/>
<rect x="559" y="558" width="200" height="4.05" fill="url(#mv36)"/>
<rect x="559" y="562" width="200" height="4.05" fill="url(#mv37)"/>
<rect x="559" y="566" width="200" height="4.05" fill="url(#mv38)"/>
<rect x="559" y="570" width="200" height="4.05" fill="url(#mv39)"/>
<rect x="559" y="574" width="200" height="4.05" fill="url(#mv40)"/>
<rect x="559" y="578" width="200" height="4.05" fill="url(#mv41)"/>
<rect x="559" y="582" width="200" height="4.05" fill="url(#mv42)"/>
<rect x="559" y="586" width="200" height="4.05" fill="url(#mv43)"/>
<rect x="559" y="590" width="200" height="4.05" fill="url(#mv44)"/>
<rect x="559" y="594" width="200" height="4.05" fill="url(#mv45)"/>
<rect x="559" y="598" width="200" height="4.05" fill="url(#mv46)"/>
<rect x="559" y="602" width="200" height="4.05" fill="url(#mv47)"/>
<rect x="559" y="606" width="200" height="4.05" fill="url(#mv48)"/>
<rect x="559" y="610" width="200" height="4.05" fill="url(#mv49)"/>
<rect x="774" y="420" width="20" height="20" fill="#e31a1c"/>
<rect x="794" y="420" width="20" height="20" fill="#4a2022"/>
<text x="819.5" y="432.3" font-family="Liberation Serif" font-size="17.3" font-weight="normal" fill="#fff" stroke="#fff" stroke-width="0.12" textLength="89.0" lengthAdjust="spacingAndGlyphs" >Thrill rides</text>
<rect x="774" y="443" width="20" height="20" fill="#1f78b4"/>
<rect x="794" y="443" width="20" height="20" fill="#1e2a35"/>
<text x="819.5" y="455.3" font-family="Liberation Serif" font-size="17.3" font-weight="normal" fill="#fff" stroke="#fff" stroke-width="0.12" textLength="96.0" lengthAdjust="spacingAndGlyphs" >Kiddle rides</text>
<rect x="774" y="466" width="20" height="20" fill="#ff7f00"/>
<rect x="794" y="466" width="20" height="20" fill="#4f3620"/>
<text x="819.5" y="478.3" font-family="Liberation Serif" font-size="17.3" font-weight="normal" fill="#fff" stroke="#fff" stroke-width="0.12" textLength="151.0" lengthAdjust="spacingAndGlyphs" >Rides for everyone</text>
<rect x="774" y="489" width="20" height="20" fill="#38e0b0"/>
<rect x="794" y="489" width="20" height="20" fill="#20463b"/>
<text x="819.5" y="501.3" font-family="Liberation Serif" font-size="17.3" font-weight="normal" fill="#fff" stroke="#fff" stroke-width="0.12" textLength="41.0" lengthAdjust="spacingAndGlyphs" >Food</text>
<text x="819.5" y="524.3" font-family="Liberation Serif" font-size="17.3" font-weight="normal" fill="#fff" stroke="#fff" stroke-width="0.12" textLength="86.0" lengthAdjust="spacingAndGlyphs" >Restrooms</text>
<text x="819.5" y="547.3" font-family="Liberation Serif" font-size="17.3" font-weight="normal" fill="#fff" stroke="#fff" stroke-width="0.12" textLength="111.0" lengthAdjust="spacingAndGlyphs" >Beer Gardens</text>
<text x="819.5" y="570.3" font-family="Liberation Serif" font-size="17.3" font-weight="normal" fill="#fff" stroke="#fff" stroke-width="0.12" textLength="76.0" lengthAdjust="spacingAndGlyphs" >Shopping</text>
<rect x="774" y="581" width="20" height="20" fill="#fb9a99"/>
<rect x="794" y="581" width="20" height="20" fill="#4e2020"/>
<text x="819.5" y="593.3" font-family="Liberation Serif" font-size="17.3" font-weight="normal" fill="#fff" stroke="#fff" stroke-width="0.12" textLength="193.0" lengthAdjust="spacingAndGlyphs" >Shows &amp; Entertainment</text>
<rect x="774" y="604" width="20" height="20" fill="#a6cee3"/>
<rect x="794" y="604" width="20" height="20" fill="#253840"/>
<text x="819.5" y="616.3" font-family="Liberation Serif" font-size="17.3" font-weight="normal" fill="#fff" stroke="#fff" stroke-width="0.12" textLength="205.0" lengthAdjust="spacingAndGlyphs" >Information &amp; Assistance</text>
<rect x="774" y="627" width="20" height="20" fill="#6a3d9a"/>
<rect x="794" y="627" width="20" height="20" fill="#2e2235"/>
<text x="819.5" y="639.3" font-family="Liberation Serif" font-size="17.3" font-weight="normal" fill="#fff" stroke="#fff" stroke-width="0.12" textLength="74.0" lengthAdjust="spacingAndGlyphs" >Entrance</text>
<rect x="774" y="650" width="20" height="20" fill="#cab2d6"/>
<rect x="794" y="650" width="20" height="20" fill="#3a2c40"/>
<text x="819.5" y="662.3" font-family="Liberation Serif" font-size="17.3" font-weight="normal" fill="#fff" stroke="#fff" stroke-width="0.12" textLength="79.0" lengthAdjust="spacingAndGlyphs" >Spectator</text>
<text x="732.1" y="692.6" font-family="Liberation Serif" font-size="17.3" font-weight="bold" fill="#fff" stroke="#fff" stroke-width="0.12" textLength="135.0" lengthAdjust="spacingAndGlyphs" >Basic statistics</text>
<text x="614.2" y="720.9" font-family="Liberation Serif" font-size="17.3" font-weight="bold" fill="#fff" stroke="#fff" stroke-width="0.12" textLength="130.0" lengthAdjust="spacingAndGlyphs" >Display details</text>
<text x="552.9" y="744.0" font-family="Liberation Serif" font-size="17.3" font-weight="normal" fill="#fff" stroke="#fff" stroke-width="0.12" textLength="228.0" lengthAdjust="spacingAndGlyphs" >Number of guests displayed:</text>
<text x="785.2" y="744.0" font-family="Liberation Serif" font-size="17.3" font-weight="normal" fill="#fff" stroke="#fff" stroke-width="0.12" textLength="10.0" lengthAdjust="spacingAndGlyphs" >8</text>
<text x="552.9" y="766.5" font-family="Liberation Serif" font-size="17.3" font-weight="normal" fill="#fff" stroke="#fff" stroke-width="0.12" textLength="163.0" lengthAdjust="spacingAndGlyphs" >Width of each guest:</text>
<text x="785.2" y="766.5" font-family="Liberation Serif" font-size="17.3" font-weight="normal" fill="#fff" stroke="#fff" stroke-width="0.12" textLength="20.0" lengthAdjust="spacingAndGlyphs" >50</text>
<text x="560.1" y="799.2" font-family="Liberation Serif" font-size="17.3" font-weight="normal" fill="#fff" stroke="#fff" stroke-width="0.12" textLength="43.0" lengthAdjust="spacingAndGlyphs" >Undo</text>
<text x="768.5" y="800.1" font-family="Liberation Serif" font-size="17.3" font-weight="bold" fill="#fff" stroke="#fff" stroke-width="0.12" textLength="65.0" lengthAdjust="spacingAndGlyphs" >History</text>
<text x="721.2" y="834.7" font-family="Liberation Serif" font-size="17.3" font-weight="bold" fill="#fff" stroke="#fff" stroke-width="0.12" textLength="157.0" lengthAdjust="spacingAndGlyphs" >Selection options</text>
<text x="552.9" y="865.2" font-family="Liberation Serif" font-size="17.3" font-weight="normal" fill="#fff" stroke="#fff" stroke-width="0.12" textLength="156.0" lengthAdjust="spacingAndGlyphs" >Order by clustering</text>
<text x="552.9" y="894.4" font-family="Liberation Serif" font-size="17.3" font-weight="normal" fill="#fff" stroke="#fff" stroke-width="0.12" textLength="39.0" lengthAdjust="spacingAndGlyphs" >JOIN</text>
<text x="552.9" y="922.7" font-family="Liberation Serif" font-size="17.3" font-weight="normal" fill="#fff" stroke="#fff" stroke-width="0.12" textLength="66.0" lengthAdjust="spacingAndGlyphs" >WHERE</text>
<rect x="714" y="848.2" width="89.6" height="22" rx="3" fill="#fff"/>
<rect x="714" y="877.8" width="233.6" height="22" rx="3" fill="#fff"/>
<rect x="714.5" y="906.8" width="232.6" height="21.6" rx="3" fill="#fff" stroke="#f0642c" stroke-width="1.2"/>
<text x="716.5" y="894" font-family="Liberation Sans" font-size="14.2" fill="#3a3a3a" textLength="228" lengthAdjust="spacingAndGlyphs">AS f ON f.cluster015 = c.cluster015</text>
<text x="716.5" y="923" font-family="Liberation Sans" font-size="14.2" fill="#3a3a3a" textLength="226" lengthAdjust="spacingAndGlyphs">80969, 1600469, 1935406, 521750 )</text>
<rect x="943.5" y="910" width="1" height="16" fill="#222"/>
<text x="548.9" y="963.9" font-family="Liberation Serif" font-size="17.3" font-weight="normal" fill="#fff" stroke="#fff" stroke-width="0.12" textLength="346.0" lengthAdjust="spacingAndGlyphs" >There are three tables available by default:</text>
<text x="548.9" y="983.4" font-family="Liberation Serif" font-size="17.3" font-weight="bold" fill="#fff" stroke="#fff" stroke-width="0.12" textLength="278.0" lengthAdjust="spacingAndGlyphs" >&quot;VAST2015MC1recoded2&quot; AS a</text>
<text x="826.9" y="983.4" font-family="Liberation Serif" font-size="17.3" font-weight="normal" fill="#fff" stroke="#fff" stroke-width="0.12" textLength="5.0" lengthAdjust="spacingAndGlyphs" >,</text>
<text x="548.9" y="1003.0" font-family="Liberation Serif" font-size="17.3" font-weight="bold" fill="#fff" stroke="#fff" stroke-width="0.12" textLength="265.0" lengthAdjust="spacingAndGlyphs" >&quot;VAST21015Attractions&quot; AS b</text>
<text x="818.9" y="1003.0" font-family="Liberation Serif" font-size="17.3" font-weight="normal" fill="#fff" stroke="#fff" stroke-width="0.12" textLength="30.0" lengthAdjust="spacingAndGlyphs" >and</text>
<text x="548.9" y="1022.6" font-family="Liberation Serif" font-size="17.3" font-weight="bold" fill="#fff" stroke="#fff" stroke-width="0.12" textLength="289.0" lengthAdjust="spacingAndGlyphs" >&quot;VAST2015GuestsClusters&quot; AS c</text>
<text x="837.9" y="1022.6" font-family="Liberation Serif" font-size="17.3" font-weight="normal" fill="#fff" stroke="#fff" stroke-width="0.12" textLength="206.0" lengthAdjust="spacingAndGlyphs" >. Any other table needs to</text>
<text x="548.9" y="1042.1" font-family="Liberation Serif" font-size="17.3" font-weight="normal" fill="#fff" stroke="#fff" stroke-width="0.12" textLength="217.0" lengthAdjust="spacingAndGlyphs" >be joined explicitely above.</text>
</svg></body></html>
